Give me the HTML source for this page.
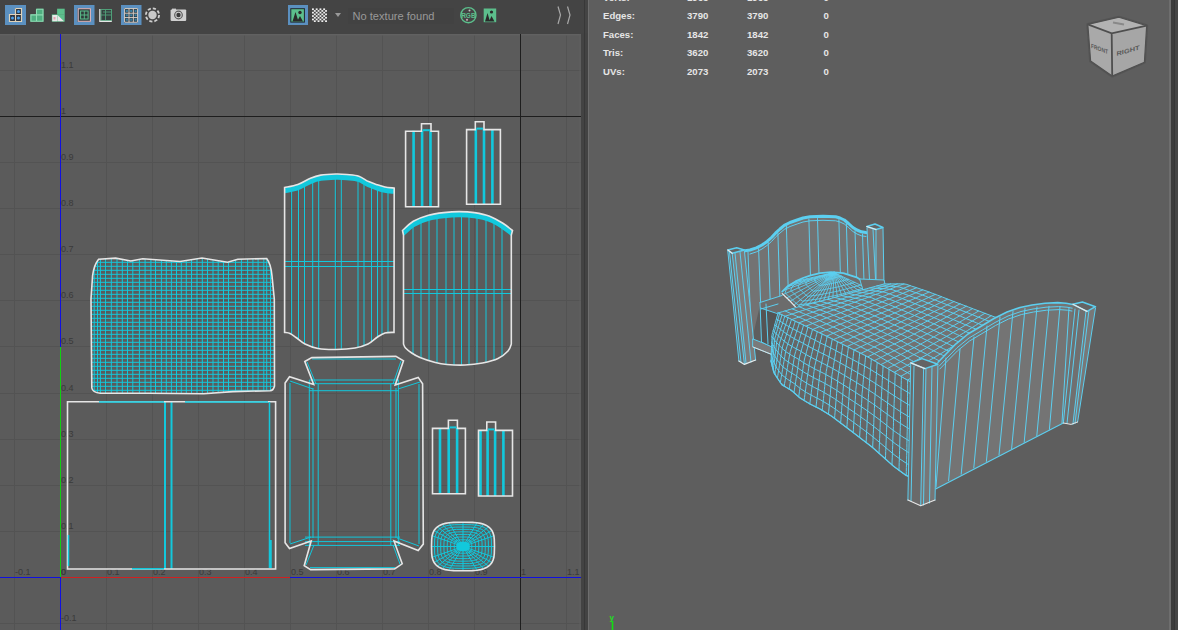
<!DOCTYPE html><html><head><meta charset="utf-8"><style>
html,body{margin:0;padding:0;width:1178px;height:630px;overflow:hidden;background:#444444;}
svg{position:absolute;left:0;top:0;}
text{font-family:"Liberation Sans",sans-serif;}
</style></head><body>
<svg width="1178" height="630" viewBox="0 0 1178 630" shape-rendering="auto">
<rect x="0" y="0" width="1178" height="630" fill="#444444"/>
<rect x="0" y="34" width="581" height="596" fill="#5b5b5b"/>
<rect x="581" y="33" width="8" height="597" fill="#434343"/>
<rect x="584" y="0" width="1" height="630" fill="#383838"/>
<rect x="588" y="0" width="1" height="630" fill="#6e6e6e"/>
<rect x="589" y="0" width="580" height="630" fill="#5e5e5e"/>
<rect x="1169" y="0" width="2" height="630" fill="#6e6e6e"/>
<rect x="1171" y="0" width="4" height="630" fill="#3c3c3c"/>
<rect x="1174" y="0" width="1" height="630" fill="#363636"/>
<rect x="1175" y="0" width="3" height="630" fill="#454545"/>
<rect x="5" y="5" width="21" height="20" fill="#5b90c0"/>
<rect x="74" y="5" width="20.5" height="20" fill="#5b90c0"/>
<rect x="121" y="5" width="20.5" height="20" fill="#5b90c0"/>
<rect x="288" y="5" width="20" height="20" fill="#5b90c0"/>
<rect x="9" y="14.5" width="13" height="7.5" fill="#2a3340"/><rect x="15" y="8" width="7" height="7" fill="#2a3340"/>
<path d="M15.5,8.5H21.5V21.5H9.5V14.5H21.5M15.5,8.5V21.5" fill="none" stroke="#e0d2b8" stroke-width="1.2"/>
<circle cx="18.5" cy="11.5" r="1.5" fill="#4aa0e8"/>
<circle cx="12.5" cy="18" r="1.5" fill="#4aa0e8"/>
<circle cx="18.5" cy="18" r="1.5" fill="#4aa0e8"/>
<rect x="36" y="8.7" width="7.4" height="6" fill="#4fae80"/><rect x="30.4" y="14.4" width="13" height="7.3" fill="#4fae80"/>
<path d="M36.5,9.2H43V21.3H30.9V14.9H43M36.5,9.2V21.3" fill="none" stroke="#8fdcb4" stroke-width="1.1"/>
<rect x="57.1" y="8.7" width="7.6" height="6" fill="#5cbf8c"/><rect x="51.8" y="14.4" width="12.9" height="7.3" fill="#5cbf8c"/>
<rect x="52.3" y="15" width="5.3" height="6.3" fill="#e8e8e8"/><path d="M58,15.5L64,21.3H58Z" fill="#e8e8e8"/>
<rect x="53.5" y="17" width="2" height="2.5" fill="#e6a0b0"/>
<rect x="77.5" y="8" width="13.5" height="14" fill="#2f3a3a"/>
<rect x="78.2" y="8.7" width="12.2" height="12.6" fill="none" stroke="#e0b8c0" stroke-width="1.1"/>
<rect x="80.6" y="11" width="7.5" height="8" fill="none" stroke="#5cbf8c" stroke-width="1"/>
<path d="M84.3,11V19M80.6,15H88" stroke="#5cbf8c" stroke-width="0.9" fill="none"/>
<rect x="99.5" y="9" width="12" height="12.5" fill="#354040"/>
<rect x="101" y="9.5" width="10.5" height="11" fill="none" stroke="#4f9f78" stroke-width="1"/>
<path d="M105.5,9.5V20.5M101,15H111.5M103,12H111" stroke="#4f9f78" stroke-width="0.9" fill="none"/>
<path d="M99.8,9V21.3H111.8" fill="none" stroke="#e6e6e6" stroke-width="1.2"/>
<rect x="124" y="8.2" width="14" height="14.4" fill="#25303a"/>
<path d="M124.6,8.6V22.2H137.6V8.6H124.6M129,8.6V22.2M133.3,8.6V22.2M124.6,13.2H137.6M124.6,17.6H137.6" fill="none" stroke="#d8d0c8" stroke-width="1"/>
<rect x="125.7" y="9.8" width="2.2" height="2.2" fill="#3a7fa0"/>
<rect x="125.7" y="14.200000000000001" width="2.2" height="2.2" fill="#3a7fa0"/>
<rect x="125.7" y="18.6" width="2.2" height="2.2" fill="#3a7fa0"/>
<rect x="130.1" y="9.8" width="2.2" height="2.2" fill="#3a7fa0"/>
<rect x="130.1" y="14.200000000000001" width="2.2" height="2.2" fill="#3a7fa0"/>
<rect x="130.1" y="18.6" width="2.2" height="2.2" fill="#3a7fa0"/>
<rect x="134.5" y="9.8" width="2.2" height="2.2" fill="#3a7fa0"/>
<rect x="134.5" y="14.200000000000001" width="2.2" height="2.2" fill="#3a7fa0"/>
<rect x="134.5" y="18.6" width="2.2" height="2.2" fill="#3a7fa0"/>
<circle cx="152.5" cy="15" r="6.6" fill="none" stroke="#cfcfcf" stroke-width="1.8" stroke-dasharray="3.2 2"/>
<circle cx="152.5" cy="15" r="4.2" fill="#c8c8c8"/>
<rect x="170.6" y="9.5" width="15.6" height="11.5" rx="1" fill="#cfcfcf"/><rect x="172" y="8.6" width="4" height="2" fill="#cfcfcf"/>
<circle cx="178.5" cy="15" r="3.8" fill="none" stroke="#5a5a5a" stroke-width="1.2"/><circle cx="178.5" cy="15" r="2.2" fill="#3a3a3a"/>
<rect x="290.3" y="8.2" width="14.6" height="14.4" fill="#1f2a2a"/><rect x="291.3" y="9.2" width="12.6" height="12.4" fill="#5cbf8c"/>
<path d="M292.5,21.5L295.5,12L298.5,21.5ZM297,21.5L300,16L303,21.5Z" fill="#2a2a2a"/><circle cx="300" cy="12.5" r="1.7" fill="#2a2a2a"/>
<rect x="312.00" y="8.40" width="1.87" height="1.7" fill="#f0f0f0"/>
<rect x="312.00" y="11.80" width="1.87" height="1.7" fill="#f0f0f0"/>
<rect x="312.00" y="15.20" width="1.87" height="1.7" fill="#f0f0f0"/>
<rect x="312.00" y="18.60" width="1.87" height="1.7" fill="#f0f0f0"/>
<rect x="313.87" y="10.10" width="1.87" height="1.7" fill="#f0f0f0"/>
<rect x="313.87" y="13.50" width="1.87" height="1.7" fill="#f0f0f0"/>
<rect x="313.87" y="16.90" width="1.87" height="1.7" fill="#f0f0f0"/>
<rect x="313.87" y="20.30" width="1.87" height="1.7" fill="#f0f0f0"/>
<rect x="315.74" y="8.40" width="1.87" height="1.7" fill="#f0f0f0"/>
<rect x="315.74" y="11.80" width="1.87" height="1.7" fill="#f0f0f0"/>
<rect x="315.74" y="15.20" width="1.87" height="1.7" fill="#f0f0f0"/>
<rect x="315.74" y="18.60" width="1.87" height="1.7" fill="#f0f0f0"/>
<rect x="317.61" y="10.10" width="1.87" height="1.7" fill="#f0f0f0"/>
<rect x="317.61" y="13.50" width="1.87" height="1.7" fill="#f0f0f0"/>
<rect x="317.61" y="16.90" width="1.87" height="1.7" fill="#f0f0f0"/>
<rect x="317.61" y="20.30" width="1.87" height="1.7" fill="#f0f0f0"/>
<rect x="319.48" y="8.40" width="1.87" height="1.7" fill="#f0f0f0"/>
<rect x="319.48" y="11.80" width="1.87" height="1.7" fill="#f0f0f0"/>
<rect x="319.48" y="15.20" width="1.87" height="1.7" fill="#f0f0f0"/>
<rect x="319.48" y="18.60" width="1.87" height="1.7" fill="#f0f0f0"/>
<rect x="321.35" y="10.10" width="1.87" height="1.7" fill="#f0f0f0"/>
<rect x="321.35" y="13.50" width="1.87" height="1.7" fill="#f0f0f0"/>
<rect x="321.35" y="16.90" width="1.87" height="1.7" fill="#f0f0f0"/>
<rect x="321.35" y="20.30" width="1.87" height="1.7" fill="#f0f0f0"/>
<rect x="323.22" y="8.40" width="1.87" height="1.7" fill="#f0f0f0"/>
<rect x="323.22" y="11.80" width="1.87" height="1.7" fill="#f0f0f0"/>
<rect x="323.22" y="15.20" width="1.87" height="1.7" fill="#f0f0f0"/>
<rect x="323.22" y="18.60" width="1.87" height="1.7" fill="#f0f0f0"/>
<rect x="325.09" y="10.10" width="1.87" height="1.7" fill="#f0f0f0"/>
<rect x="325.09" y="13.50" width="1.87" height="1.7" fill="#f0f0f0"/>
<rect x="325.09" y="16.90" width="1.87" height="1.7" fill="#f0f0f0"/>
<rect x="325.09" y="20.30" width="1.87" height="1.7" fill="#f0f0f0"/>
<path d="M335,13L341,13L338,17Z" fill="#9a9a9a"/>
<rect x="348" y="8" width="106" height="16" fill="#424242"/>
<text x="352.5" y="19.8" font-size="11" fill="#999999" textLength="82" lengthAdjust="spacingAndGlyphs">No texture found</text>
<circle cx="468.4" cy="15.2" r="7.6" fill="none" stroke="#5cbf8c" stroke-width="1.4"/>
<text x="468.4" y="17.6" font-size="6.5" font-weight="bold" fill="#5cbf8c" text-anchor="middle">RGB</text>
<circle cx="469.5" cy="10.5" r="1" fill="#c0c0c0"/><circle cx="467" cy="19.8" r="1.1" fill="#c0a0a8"/>
<rect x="483.7" y="8.5" width="12.5" height="13.7" fill="#5cbf8c"/>
<path d="M485,21.5L487.5,13L490,21.5ZM489,21.5L491.5,16L494.5,21.5Z" fill="#2a2a2a"/><circle cx="491.5" cy="12" r="1.6" fill="#2a2a2a"/>
<path d="M558,6.5L560.5,15L558,24M567.5,6.5L570,15L567.5,24" fill="none" stroke="#a8a8a8" stroke-width="1.2"/>
<defs><clipPath id="cv"><rect x="0" y="34" width="581" height="596"/></clipPath></defs>
<g clip-path="url(#cv)">
<rect x="-32" y="33" width="1" height="597" fill="#535353"/>
<rect x="14" y="33" width="1" height="597" fill="#535353"/>
<rect x="60" y="33" width="1" height="597" fill="#535353"/>
<rect x="106" y="33" width="1" height="597" fill="#535353"/>
<rect x="152" y="33" width="1" height="597" fill="#535353"/>
<rect x="198" y="33" width="1" height="597" fill="#535353"/>
<rect x="244" y="33" width="1" height="597" fill="#535353"/>
<rect x="290" y="33" width="1" height="597" fill="#535353"/>
<rect x="336" y="33" width="1" height="597" fill="#535353"/>
<rect x="382" y="33" width="1" height="597" fill="#535353"/>
<rect x="428" y="33" width="1" height="597" fill="#535353"/>
<rect x="474" y="33" width="1" height="597" fill="#535353"/>
<rect x="520" y="33" width="1" height="597" fill="#535353"/>
<rect x="566" y="33" width="1" height="597" fill="#535353"/>
<rect x="612" y="33" width="1" height="597" fill="#535353"/>
<rect x="0" y="623" width="581" height="1" fill="#535353"/>
<rect x="0" y="577" width="581" height="1" fill="#535353"/>
<rect x="0" y="531" width="581" height="1" fill="#535353"/>
<rect x="0" y="485" width="581" height="1" fill="#535353"/>
<rect x="0" y="439" width="581" height="1" fill="#535353"/>
<rect x="0" y="393" width="581" height="1" fill="#535353"/>
<rect x="0" y="346" width="581" height="1" fill="#535353"/>
<rect x="0" y="300" width="581" height="1" fill="#535353"/>
<rect x="0" y="254" width="581" height="1" fill="#535353"/>
<rect x="0" y="208" width="581" height="1" fill="#535353"/>
<rect x="0" y="162" width="581" height="1" fill="#535353"/>
<rect x="0" y="116" width="581" height="1" fill="#535353"/>
<rect x="0" y="70" width="581" height="1" fill="#535353"/>
<rect x="0" y="24" width="581" height="1" fill="#535353"/>
<rect x="0" y="34" width="581" height="1.5" fill="#616161"/>
<rect x="579.5" y="34" width="1" height="596" fill="#606060"/>
<rect x="0" y="116" width="581" height="1" fill="#1e1e1e"/>
<rect x="520" y="33" width="1" height="597" fill="#1e1e1e"/>
<rect x="0" y="577" width="581" height="1" fill="#1010e0"/>
<rect x="60" y="577" width="230" height="1" fill="#d02020"/>
<rect x="60" y="33" width="1" height="597" fill="#1010e0"/>
<rect x="60" y="347" width="1" height="230" fill="#10d010"/>
<text x="15" y="575" font-size="9" fill="#3a3a3a">-0.1</text>
<text x="61" y="575" font-size="9" fill="#3a3a3a">0</text>
<text x="107" y="575" font-size="9" fill="#3a3a3a">0.1</text>
<text x="153" y="575" font-size="9" fill="#3a3a3a">0.2</text>
<text x="199" y="575" font-size="9" fill="#3a3a3a">0.3</text>
<text x="245" y="575" font-size="9" fill="#3a3a3a">0.4</text>
<text x="291" y="575" font-size="9" fill="#3a3a3a">0.5</text>
<text x="337" y="575" font-size="9" fill="#3a3a3a">0.6</text>
<text x="383" y="575" font-size="9" fill="#3a3a3a">0.7</text>
<text x="429" y="575" font-size="9" fill="#3a3a3a">0.8</text>
<text x="475" y="575" font-size="9" fill="#3a3a3a">0.9</text>
<text x="521" y="575" font-size="9" fill="#3a3a3a">1</text>
<text x="567" y="575" font-size="9" fill="#3a3a3a">1.1</text>
<text x="61" y="621" font-size="9" fill="#3a3a3a">-0.1</text>
<text x="61" y="575" font-size="9" fill="#3a3a3a">0</text>
<text x="61" y="529" font-size="9" fill="#3a3a3a">0.1</text>
<text x="61" y="483" font-size="9" fill="#3a3a3a">0.2</text>
<text x="61" y="437" font-size="9" fill="#3a3a3a">0.3</text>
<text x="61" y="391" font-size="9" fill="#3a3a3a">0.4</text>
<text x="61" y="344" font-size="9" fill="#3a3a3a">0.5</text>
<text x="61" y="298" font-size="9" fill="#3a3a3a">0.6</text>
<text x="61" y="252" font-size="9" fill="#3a3a3a">0.7</text>
<text x="61" y="206" font-size="9" fill="#3a3a3a">0.8</text>
<text x="61" y="160" font-size="9" fill="#3a3a3a">0.9</text>
<text x="61" y="114" font-size="9" fill="#3a3a3a">1</text>
<text x="61" y="68" font-size="9" fill="#3a3a3a">1.1</text>
<defs><clipPath id="blk"><path d="M98.6,259.3 L115.6,258.1 L130.8,261 L142.7,258.8 L180,261.5 L202,258 L227.6,262.2 L237.8,259.3 L266.7,258.5 Q271,264 272,276 L274.3,299 L274.5,386 Q273.5,390.5 270,390.7 L232.7,391.6 L203.8,393.8 L147.8,393.3 L100.3,393.3 Q92.5,392.5 91.8,388 L91,299 L92.6,275.5 Q94,265 98.6,259.3 Z"/></clipPath></defs>
<g clip-path="url(#blk)" stroke="#12c8dc" stroke-width="1" fill="none">
<path d="M94.2,255V396M97.5,255V396M100.4,255V396M105.6,255V396M111.3,255V396M117.0,255V396M122.3,255V396M127.5,255V396M132.8,255V396M139.4,255V396M145.1,255V396M150.9,255V396M155.5,255V396M161.4,255V396M166.3,255V396M171.4,255V396M176.5,255V396M181.3,255V396M186.3,255V396M191.5,255V396M197.0,255V396M202.3,255V396M207.5,255V396M213.0,255V396M218.2,255V396M223.5,255V396M228.5,255V396M235.5,255V396M241.4,255V396M247.6,255V396M252.9,255V396M258.1,255V396M263.8,255V396M266.7,255V396M270.5,255V396M88,262.3H278M88,266.3H278M88,270.3H278M88,274.3H278M88,278.3H278M88,282.3H278M88,286.3H278M88,290.3H278M88,294.3H278M88,298.3H278M88,302.3H278M88,306.3H278M88,310.3H278M88,314.3H278M88,318.3H278M88,322.3H278M88,326.3H278M88,330.3H278M88,334.3H278M88,338.3H278M88,342.3H278M88,346.3H278M88,350.3H278M88,354.3H278M88,358.3H278M88,362.3H278M88,366.3H278M88,370.3H278M88,374.3H278M88,378.3H278M88,382.3H278M88,386.3H278M88,390.3H278"/>
</g>
<path d="M98.6,259.3 L115.6,258.1 L130.8,261 L142.7,258.8 L180,261.5 L202,258 L227.6,262.2 L237.8,259.3 L266.7,258.5 Q271,264 272,276 L274.3,299 L274.5,386 Q273.5,390.5 270,390.7 L232.7,391.6 L203.8,393.8 L147.8,393.3 L100.3,393.3 Q92.5,392.5 91.8,388 L91,299 L92.6,275.5 Q94,265 98.6,259.3 Z" fill="none" stroke="#e6e6e6" stroke-width="1.6"/>
<g fill="none" stroke="#12c8dc" stroke-width="2">
<path d="M165,402V569M171.5,402V569"/>
</g>
<path d="M67.5,401.7H275.6V569H67.5Z" fill="none" stroke="#e6e6e6" stroke-width="1.6"/>
<path d="M269.5,402V568M271,540V568M99,401.9H164M185,401.9H268M132,568.8H164M68.5,535V566" fill="none" stroke="#12c8dc" stroke-width="1.5"/>
<defs><clipPath id="hb1"><path d="M284.6,187.5 C286.8,187.0 293.5,186.1 297.8,184.5 C302.1,182.9 306.7,179.8 310.5,178.2 C314.3,176.6 316.4,175.8 320.7,175.1 C324.9,174.4 331.6,174.1 336,174 C340.4,173.9 343.1,174.1 346.9,174.5 C350.7,174.9 355.2,175.0 358.8,176.2 C362.4,177.4 365.5,180.2 368.6,181.6 C371.7,183.0 374.6,183.9 377.3,184.8 C380.0,185.7 382.1,186.4 384.9,187 C387.7,187.6 392.6,187.9 394.2,188.1 L394,332.4 C392.5,332.5 387.8,332.2 385,333 C382.2,333.8 380.3,335.2 377.5,337 C374.7,338.8 371.8,342.2 368,344 C364.2,345.8 360.3,347.1 355,348 C349.7,348.9 342.2,349.4 336,349.5 C329.8,349.6 323.2,349.4 318,348.5 C312.8,347.6 308.7,345.8 305,344 C301.3,342.2 298.5,339.2 296,337.5 C293.5,335.8 291.9,334.4 290,333.5 C288.1,332.6 285.5,332.6 284.6,332.4 Z"/></clipPath></defs>
<g clip-path="url(#hb1)" fill="none" stroke="#12c8dc" stroke-width="1">
<path d="M291.6,170V352M298.5,170V352M304.5,170V352M312.7,170V352M318.7,170V352M335.3,170V352M341.3,170V352M358,170V352M364,170V352M371.5,170V352M377.5,170V352M382,170V352M388,170V352"/>
<path d="M280,261.5H400M280,266.5H400"/>
</g>
<g clip-path="url(#hb1)"><path d="M284.6,190.5 C286.8,190.0 293.5,189.1 297.8,187.5 C302.1,185.9 306.7,182.8 310.5,181.2 C314.3,179.6 316.4,178.8 320.7,178.1 C324.9,177.4 331.6,177.1 336,177 C340.4,176.9 343.1,177.1 346.9,177.5 C350.7,177.9 355.2,178.0 358.8,179.2 C362.4,180.4 365.5,183.2 368.6,184.6 C371.7,186.0 374.6,186.9 377.3,187.8 C380.0,188.7 382.1,189.4 384.9,190 C387.7,190.6 392.6,190.9 394.2,191.1" fill="none" stroke="#12c8dc" stroke-width="5.5"/></g>
<path d="M284.6,187.5 C286.8,187.0 293.5,186.1 297.8,184.5 C302.1,182.9 306.7,179.8 310.5,178.2 C314.3,176.6 316.4,175.8 320.7,175.1 C324.9,174.4 331.6,174.1 336,174 C340.4,173.9 343.1,174.1 346.9,174.5 C350.7,174.9 355.2,175.0 358.8,176.2 C362.4,177.4 365.5,180.2 368.6,181.6 C371.7,183.0 374.6,183.9 377.3,184.8 C380.0,185.7 382.1,186.4 384.9,187 C387.7,187.6 392.6,187.9 394.2,188.1 L394,332.4 C392.5,332.5 387.8,332.2 385,333 C382.2,333.8 380.3,335.2 377.5,337 C374.7,338.8 371.8,342.2 368,344 C364.2,345.8 360.3,347.1 355,348 C349.7,348.9 342.2,349.4 336,349.5 C329.8,349.6 323.2,349.4 318,348.5 C312.8,347.6 308.7,345.8 305,344 C301.3,342.2 298.5,339.2 296,337.5 C293.5,335.8 291.9,334.4 290,333.5 C288.1,332.6 285.5,332.6 284.6,332.4 Z" fill="none" stroke="#e6e6e6" stroke-width="1.6"/>
<defs><clipPath id="fb"><path d="M402.5,230.5 C404.3,229.0 409.0,223.9 413.3,221.3 C417.6,218.8 423.4,216.6 428.5,215.2 C433.6,213.8 438.7,213.2 443.8,212.6 C448.9,212.0 454.0,211.6 459.1,211.6 C464.2,211.6 469.3,211.8 474.4,212.6 C479.5,213.4 484.9,214.4 489.6,216.2 C494.4,218.0 499.1,220.9 502.9,223.3 C506.7,225.7 510.9,229.3 512.5,230.5 L511.3,235 L511.3,344 C510.8,345.2 510.2,348.6 508,351 C505.8,353.4 502.2,356.5 498,358.5 C493.8,360.5 488.0,361.9 482.5,363 C477.0,364.1 470.9,364.8 465,365 C459.1,365.2 451.9,364.9 447,364.5 C442.1,364.1 439.8,363.7 435.3,362.5 C430.8,361.3 423.9,359.1 420,357.5 C416.1,355.9 414.1,354.6 411.7,353 C409.3,351.4 406.9,349.5 405.5,348 C404.1,346.5 403.8,344.7 403.5,344 L403.5,235 Z"/></clipPath></defs>
<g clip-path="url(#fb)" fill="none" stroke="#12c8dc" stroke-width="1">
<path d="M413,205V370M421,205V370M429,205V370M437,205V370M446,205V370M454,205V370M461.5,205V370M469,205V370M477,205V370M486,205V370M494,205V370M502,205V370"/>
<path d="M400,289.5H515M400,293.5H515"/>
</g>
<g clip-path="url(#fb)"><path d="M402.5,233.5 C404.3,232.0 409.0,226.9 413.3,224.3 C417.6,221.8 423.4,219.6 428.5,218.2 C433.6,216.8 438.7,216.2 443.8,215.6 C448.9,215.0 454.0,214.6 459.1,214.6 C464.2,214.6 469.3,214.8 474.4,215.6 C479.5,216.4 484.9,217.4 489.6,219.2 C494.4,221.0 499.1,223.9 502.9,226.3 C506.7,228.7 510.9,232.3 512.5,233.5" fill="none" stroke="#12c8dc" stroke-width="5.5"/></g>
<path d="M402.5,230.5 C404.3,229.0 409.0,223.9 413.3,221.3 C417.6,218.8 423.4,216.6 428.5,215.2 C433.6,213.8 438.7,213.2 443.8,212.6 C448.9,212.0 454.0,211.6 459.1,211.6 C464.2,211.6 469.3,211.8 474.4,212.6 C479.5,213.4 484.9,214.4 489.6,216.2 C494.4,218.0 499.1,220.9 502.9,223.3 C506.7,225.7 510.9,229.3 512.5,230.5 L511.3,235 L511.3,344 C510.8,345.2 510.2,348.6 508,351 C505.8,353.4 502.2,356.5 498,358.5 C493.8,360.5 488.0,361.9 482.5,363 C477.0,364.1 470.9,364.8 465,365 C459.1,365.2 451.9,364.9 447,364.5 C442.1,364.1 439.8,363.7 435.3,362.5 C430.8,361.3 423.9,359.1 420,357.5 C416.1,355.9 414.1,354.6 411.7,353 C409.3,351.4 406.9,349.5 405.5,348 C404.1,346.5 403.8,344.7 403.5,344 L403.5,235 Z" fill="none" stroke="#e6e6e6" stroke-width="1.6"/>
<g fill="none" stroke="#12c8dc" stroke-width="2.6">
<path d="M413.6,130.7V206.7M422.1,130.7V206.7M430.5,130.7V206.7"/>
</g>
<path d="M405.6,131.2H421.5V123.7H431V131.2H438.5V206.7H405.6Z" fill="none" stroke="#e6e6e6" stroke-width="1.6"/>
<path d="M422.5,130.2H430" stroke="#12c8dc" stroke-width="2" fill="none"/>
<g fill="none" stroke="#12c8dc" stroke-width="2.6">
<path d="M475.8,129.1V204.2M484,129.1V204.2M492.4,129.1V204.2"/>
</g>
<path d="M466.6,129.6H475.3V121.7H484V129.6H500.4V204.2H466.6Z" fill="none" stroke="#e6e6e6" stroke-width="1.6"/>
<path d="M476.3,128.6H483" stroke="#12c8dc" stroke-width="2" fill="none"/>
<g fill="none" stroke="#12c8dc" stroke-width="2.6">
<path d="M440,427.9V493.7M448.7,427.9V493.7M457.1,427.9V493.7"/>
</g>
<path d="M432.5,428.4H448.4V420.3H457.4V428.4H465.4V493.7H432.5Z" fill="none" stroke="#e6e6e6" stroke-width="1.6"/>
<path d="M449.4,427.4H456.4" stroke="#12c8dc" stroke-width="2" fill="none"/>
<g fill="none" stroke="#12c8dc" stroke-width="2.6">
<path d="M480.5,429.9V496M487.6,429.9V496M495.1,429.9V496M503.4,429.9V496"/>
</g>
<path d="M478.5,430.4H486.8V422H495.6V430.4H512.5V496H478.5Z" fill="none" stroke="#e6e6e6" stroke-width="1.6"/>
<path d="M487.8,429.4H494.6" stroke="#12c8dc" stroke-width="2" fill="none"/>
<g fill="none" stroke="#12c8dc" stroke-width="1">
<path d="M309.3,380H399M309,383.7H399M309,390.7H399 M309.3,380V545M318.2,384V545M390.8,384V545M398.4,380V545 M305,537.1H400M305,541.6H400M305,545.4H400 M307,362L316,384 M401,361L393,384 M290,381L313,389 M420,382L398,389 M290,544L311,537 M419,546L397,538 M306,565L314,545 M400,564L393,545 M312,359H396 M310,567.6H395 M290,383V543 M419,384V544 M313,388V538 M396,388V538"/>
</g>
<path d="M304.8,361.5 L311.8,357.6 L395.9,356.4 L403.5,360.8 L395.2,385 L418.2,377.4 L422.6,383.7 L423.3,544.1 L418.2,550.5 L394,540.9 L402.2,563.8 L394.6,568.9 L310.6,569.6 L304.2,565.7 L311.2,540.9 L289.5,548.6 L285.1,542.8 L285.1,383.1 L289.5,376.7 L313.7,384.4 Z" fill="none" stroke="#e6e6e6" stroke-width="1.6"/>
<defs><clipPath id="pil"><path d="M494.5,546.5 L494.3,553.6 L493.9,557.3 L493.0,560.1 L491.9,562.5 L490.4,564.5 L488.6,566.2 L486.4,567.6 L483.8,568.7 L480.7,569.6 L477.0,570.2 L472.3,570.6 L463.0,570.7 L453.7,570.6 L449.0,570.2 L445.3,569.6 L442.2,568.7 L439.6,567.6 L437.4,566.2 L435.6,564.5 L434.1,562.5 L433.0,560.1 L432.1,557.3 L431.7,553.6 L431.5,546.5 L431.7,539.4 L432.1,535.7 L433.0,532.9 L434.1,530.5 L435.6,528.5 L437.4,526.8 L439.6,525.4 L442.2,524.3 L445.3,523.4 L449.0,522.8 L453.7,522.4 L463.0,522.3 L472.3,522.4 L477.0,522.8 L480.7,523.4 L483.8,524.3 L486.4,525.4 L488.6,526.8 L490.4,528.5 L491.9,530.5 L493.0,532.9 L493.9,535.7 L494.3,539.4Z"/></clipPath></defs>
<g clip-path="url(#pil)" fill="none" stroke="#12c8dc" stroke-width="1">
<rect x="429" y="518.5" width="68" height="56" fill="#12c8dc" fill-opacity="0.1" stroke="none"/>
<path d="M467.9,546.5 L467.8,547.6 L467.8,548.2 L467.6,548.6 L467.5,549.0 L467.2,549.3 L467.0,549.5 L466.6,549.8 L466.2,549.9 L465.7,550.1 L465.2,550.2 L464.4,550.2 L463.0,550.2 L461.6,550.2 L460.8,550.2 L460.3,550.1 L459.8,549.9 L459.4,549.8 L459.0,549.5 L458.8,549.3 L458.5,549.0 L458.4,548.6 L458.2,548.2 L458.2,547.6 L458.1,546.5 L458.2,545.4 L458.2,544.8 L458.4,544.4 L458.5,544.0 L458.8,543.7 L459.0,543.5 L459.4,543.2 L459.8,543.1 L460.3,542.9 L460.8,542.8 L461.6,542.8 L463.0,542.8 L464.4,542.8 L465.2,542.8 L465.7,542.9 L466.2,543.1 L466.6,543.2 L467.0,543.5 L467.2,543.7 L467.5,544.0 L467.6,544.4 L467.8,544.8 L467.8,545.4Z"/>
<path d="M471.8,546.5 L471.7,548.5 L471.6,549.5 L471.4,550.3 L471.0,550.9 L470.6,551.5 L470.1,552.0 L469.5,552.4 L468.8,552.7 L467.9,552.9 L466.9,553.1 L465.6,553.2 L463.0,553.2 L460.4,553.2 L459.1,553.1 L458.1,552.9 L457.2,552.7 L456.5,552.4 L455.9,552.0 L455.4,551.5 L455.0,550.9 L454.6,550.3 L454.4,549.5 L454.3,548.5 L454.2,546.5 L454.3,544.5 L454.4,543.5 L454.6,542.7 L455.0,542.1 L455.4,541.5 L455.9,541.0 L456.5,540.6 L457.2,540.3 L458.1,540.1 L459.1,539.9 L460.4,539.8 L463.0,539.8 L465.6,539.8 L466.9,539.9 L467.9,540.1 L468.8,540.3 L469.5,540.6 L470.1,541.0 L470.6,541.5 L471.0,542.1 L471.4,542.7 L471.6,543.5 L471.7,544.5Z"/>
<path d="M475.4,546.5 L475.3,549.3 L475.1,550.7 L474.8,551.8 L474.4,552.8 L473.8,553.6 L473.1,554.2 L472.2,554.8 L471.2,555.2 L470.0,555.6 L468.5,555.8 L466.6,556.0 L463.0,556.0 L459.4,556.0 L457.5,555.8 L456.0,555.6 L454.8,555.2 L453.8,554.8 L452.9,554.2 L452.2,553.6 L451.6,552.8 L451.2,551.8 L450.9,550.7 L450.7,549.3 L450.6,546.5 L450.7,543.7 L450.9,542.3 L451.2,541.2 L451.6,540.2 L452.2,539.4 L452.9,538.8 L453.8,538.2 L454.8,537.8 L456.0,537.4 L457.5,537.2 L459.4,537.0 L463.0,537.0 L466.6,537.0 L468.5,537.2 L470.0,537.4 L471.2,537.8 L472.2,538.2 L473.1,538.8 L473.8,539.4 L474.4,540.2 L474.8,541.2 L475.1,542.3 L475.3,543.7Z"/>
<path d="M478.8,546.5 L478.7,550.1 L478.5,551.9 L478.1,553.3 L477.5,554.5 L476.8,555.5 L475.8,556.4 L474.7,557.1 L473.4,557.6 L471.9,558.1 L470.0,558.4 L467.7,558.6 L463.0,558.6 L458.3,558.6 L456.0,558.4 L454.1,558.1 L452.6,557.6 L451.3,557.1 L450.2,556.4 L449.2,555.5 L448.5,554.5 L447.9,553.3 L447.5,551.9 L447.3,550.1 L447.2,546.5 L447.3,542.9 L447.5,541.1 L447.9,539.7 L448.5,538.5 L449.2,537.5 L450.2,536.6 L451.3,535.9 L452.6,535.4 L454.1,534.9 L456.0,534.6 L458.3,534.4 L463.0,534.4 L467.7,534.4 L470.0,534.6 L471.9,534.9 L473.4,535.4 L474.7,535.9 L475.8,536.6 L476.8,537.5 L477.5,538.5 L478.1,539.7 L478.5,541.1 L478.7,542.9Z"/>
<path d="M482.1,546.5 L482.0,550.8 L481.7,553.0 L481.2,554.8 L480.5,556.2 L479.6,557.4 L478.5,558.4 L477.2,559.3 L475.6,560.0 L473.7,560.5 L471.5,560.9 L468.6,561.1 L463.0,561.2 L457.4,561.1 L454.5,560.9 L452.3,560.5 L450.4,560.0 L448.8,559.3 L447.5,558.4 L446.4,557.4 L445.5,556.2 L444.8,554.8 L444.3,553.0 L444.0,550.8 L443.9,546.5 L444.0,542.2 L444.3,540.0 L444.8,538.2 L445.5,536.8 L446.4,535.6 L447.5,534.6 L448.8,533.7 L450.4,533.0 L452.3,532.5 L454.5,532.1 L457.4,531.9 L463.0,531.8 L468.6,531.9 L471.5,532.1 L473.7,532.5 L475.6,533.0 L477.2,533.7 L478.5,534.6 L479.6,535.6 L480.5,536.8 L481.2,538.2 L481.7,540.0 L482.0,542.2Z"/>
<path d="M485.3,546.5 L485.2,551.6 L484.9,554.1 L484.3,556.1 L483.5,557.8 L482.4,559.2 L481.1,560.4 L479.6,561.4 L477.7,562.2 L475.5,562.8 L472.9,563.3 L469.6,563.6 L463.0,563.6 L456.4,563.6 L453.1,563.3 L450.5,562.8 L448.3,562.2 L446.4,561.4 L444.9,560.4 L443.6,559.2 L442.5,557.8 L441.7,556.1 L441.1,554.1 L440.8,551.6 L440.7,546.5 L440.8,541.4 L441.1,538.9 L441.7,536.9 L442.5,535.2 L443.6,533.8 L444.9,532.6 L446.4,531.6 L448.3,530.8 L450.5,530.2 L453.1,529.7 L456.4,529.4 L463.0,529.4 L469.6,529.4 L472.9,529.7 L475.5,530.2 L477.7,530.8 L479.6,531.6 L481.1,532.6 L482.4,533.8 L483.5,535.2 L484.3,536.9 L484.9,538.9 L485.2,541.4Z"/>
<path d="M488.4,546.5 L488.3,552.3 L487.9,555.2 L487.3,557.5 L486.3,559.4 L485.1,561.0 L483.7,562.4 L481.9,563.5 L479.8,564.4 L477.3,565.1 L474.3,565.6 L470.5,565.9 L463.0,566.0 L455.5,565.9 L451.7,565.6 L448.7,565.1 L446.2,564.4 L444.1,563.5 L442.3,562.4 L440.9,561.0 L439.7,559.4 L438.7,557.5 L438.1,555.2 L437.7,552.3 L437.6,546.5 L437.7,540.7 L438.1,537.8 L438.7,535.5 L439.7,533.6 L440.9,532.0 L442.3,530.6 L444.1,529.5 L446.2,528.6 L448.7,527.9 L451.7,527.4 L455.5,527.1 L463.0,527.0 L470.5,527.1 L474.3,527.4 L477.3,527.9 L479.8,528.6 L481.9,529.5 L483.7,530.6 L485.1,532.0 L486.3,533.6 L487.3,535.5 L487.9,537.8 L488.3,540.7Z"/>
<path d="M491.5,546.5 L491.4,553.0 L490.9,556.2 L490.2,558.8 L489.1,560.9 L487.8,562.8 L486.1,564.3 L484.2,565.6 L481.8,566.6 L479.0,567.4 L475.7,567.9 L471.4,568.3 L463.0,568.4 L454.6,568.3 L450.3,567.9 L447.0,567.4 L444.2,566.6 L441.8,565.6 L439.9,564.3 L438.2,562.8 L436.9,560.9 L435.8,558.8 L435.1,556.2 L434.6,553.0 L434.5,546.5 L434.6,540.0 L435.1,536.8 L435.8,534.2 L436.9,532.1 L438.2,530.2 L439.9,528.7 L441.8,527.4 L444.2,526.4 L447.0,525.6 L450.3,525.1 L454.6,524.7 L463.0,524.6 L471.4,524.7 L475.7,525.1 L479.0,525.6 L481.8,526.4 L484.2,527.4 L486.1,528.7 L487.8,530.2 L489.1,532.1 L490.2,534.2 L490.9,536.8 L491.4,540.0Z"/>
<path d="M463,546.5L494.5,546.5"/>
<path d="M463,546.5L493.9,557.3"/>
<path d="M463,546.5L491.9,562.5"/>
<path d="M463,546.5L488.6,566.2"/>
<path d="M463,546.5L483.8,568.7"/>
<path d="M463,546.5L477.0,570.2"/>
<path d="M463,546.5L463.0,570.7"/>
<path d="M463,546.5L449.0,570.2"/>
<path d="M463,546.5L442.2,568.7"/>
<path d="M463,546.5L437.4,566.2"/>
<path d="M463,546.5L434.1,562.5"/>
<path d="M463,546.5L432.1,557.3"/>
<path d="M463,546.5L431.5,546.5"/>
<path d="M463,546.5L432.1,535.7"/>
<path d="M463,546.5L434.1,530.5"/>
<path d="M463,546.5L437.4,526.8"/>
<path d="M463,546.5L442.2,524.3"/>
<path d="M463,546.5L449.0,522.8"/>
<path d="M463,546.5L463.0,522.3"/>
<path d="M463,546.5L477.0,522.8"/>
<path d="M463,546.5L483.8,524.3"/>
<path d="M463,546.5L488.6,526.8"/>
<path d="M463,546.5L491.9,530.5"/>
<path d="M463,546.5L493.9,535.7"/>
<ellipse cx="463" cy="546.5" rx="7" ry="5" fill="#12c8dc" stroke="none"/>
</g>
<path d="M494.5,546.5 L494.3,553.6 L493.9,557.3 L493.0,560.1 L491.9,562.5 L490.4,564.5 L488.6,566.2 L486.4,567.6 L483.8,568.7 L480.7,569.6 L477.0,570.2 L472.3,570.6 L463.0,570.7 L453.7,570.6 L449.0,570.2 L445.3,569.6 L442.2,568.7 L439.6,567.6 L437.4,566.2 L435.6,564.5 L434.1,562.5 L433.0,560.1 L432.1,557.3 L431.7,553.6 L431.5,546.5 L431.7,539.4 L432.1,535.7 L433.0,532.9 L434.1,530.5 L435.6,528.5 L437.4,526.8 L439.6,525.4 L442.2,524.3 L445.3,523.4 L449.0,522.8 L453.7,522.4 L463.0,522.3 L472.3,522.4 L477.0,522.8 L480.7,523.4 L483.8,524.3 L486.4,525.4 L488.6,526.8 L490.4,528.5 L491.9,530.5 L493.0,532.9 L493.9,535.7 L494.3,539.4Z" fill="none" stroke="#e6e6e6" stroke-width="1.6"/>
</g>
<text x="603" y="0.6" font-size="9.6" font-weight="bold" fill="#e6e6e6">Verts:</text>
<text x="687" y="0.6" font-size="9.6" font-weight="bold" fill="#e6e6e6">1965</text>
<text x="747" y="0.6" font-size="9.6" font-weight="bold" fill="#e6e6e6">1965</text>
<text x="823.5" y="0.6" font-size="9.6" font-weight="bold" fill="#e6e6e6">0</text>
<text x="603" y="19.1" font-size="9.6" font-weight="bold" fill="#e6e6e6">Edges:</text>
<text x="687" y="19.1" font-size="9.6" font-weight="bold" fill="#e6e6e6">3790</text>
<text x="747" y="19.1" font-size="9.6" font-weight="bold" fill="#e6e6e6">3790</text>
<text x="823.5" y="19.1" font-size="9.6" font-weight="bold" fill="#e6e6e6">0</text>
<text x="603" y="37.6" font-size="9.6" font-weight="bold" fill="#e6e6e6">Faces:</text>
<text x="687" y="37.6" font-size="9.6" font-weight="bold" fill="#e6e6e6">1842</text>
<text x="747" y="37.6" font-size="9.6" font-weight="bold" fill="#e6e6e6">1842</text>
<text x="823.5" y="37.6" font-size="9.6" font-weight="bold" fill="#e6e6e6">0</text>
<text x="603" y="56.1" font-size="9.6" font-weight="bold" fill="#e6e6e6">Tris:</text>
<text x="687" y="56.1" font-size="9.6" font-weight="bold" fill="#e6e6e6">3620</text>
<text x="747" y="56.1" font-size="9.6" font-weight="bold" fill="#e6e6e6">3620</text>
<text x="823.5" y="56.1" font-size="9.6" font-weight="bold" fill="#e6e6e6">0</text>
<text x="603" y="74.6" font-size="9.6" font-weight="bold" fill="#e6e6e6">UVs:</text>
<text x="687" y="74.6" font-size="9.6" font-weight="bold" fill="#e6e6e6">2073</text>
<text x="747" y="74.6" font-size="9.6" font-weight="bold" fill="#e6e6e6">2073</text>
<text x="823.5" y="74.6" font-size="9.6" font-weight="bold" fill="#e6e6e6">0</text>
<path d="M1087.8,24.4 L1118.9,17.2 L1146.7,25.6 L1144.4,62.2 L1112.2,76.1 L1090.6,61.1Z" fill="#565656" stroke="#555" stroke-width="3" stroke-linejoin="round"/>
<path d="M1087.8,24.4 L1118.9,17.2 L1146.7,25.6 L1111.7,33.3Z" fill="#b2b2b2"/>
<path d="M1087.8,24.4 L1111.7,33.3 L1112.2,76.1 L1090.6,61.1Z" fill="#a9a9a9"/>
<path d="M1111.7,33.3 L1146.7,25.6 L1144.4,62.2 L1112.2,76.1Z" fill="#a6a6a6"/>
<path d="M1087.8,24.4L1111.7,33.3L1146.7,25.6M1111.7,33.3L1112.2,76.1" fill="none" stroke="#4e4e4e" stroke-width="1.8"/>
<path d="M1087.8,24.4 L1118.9,17.2 L1146.7,25.6 L1144.4,62.2 L1112.2,76.1 L1090.6,61.1Z" fill="none" stroke="#505050" stroke-width="1.2" stroke-linejoin="round"/>
<text transform="matrix(1,0.36,0,1,1091,48)" font-size="6.2" font-weight="bold" fill="#585858" textLength="17" lengthAdjust="spacingAndGlyphs">FRONT</text>
<text transform="matrix(1,-0.28,0,1,1116.5,56)" font-size="6.2" font-weight="bold" fill="#585858" textLength="23" lengthAdjust="spacingAndGlyphs">RIGHT</text>
<path d="M1113,22.5L1124,24.5" stroke="#888" stroke-width="2.2"/>
<path d="M612.5,621V630" stroke="#10e010" stroke-width="1.6"/>
<text x="609.5" y="619.5" font-size="8" font-weight="bold" fill="#20e020">y</text>
<g stroke-linejoin="round" stroke-linecap="round">
<path d="M743.6,251.0 L750.0,250.0 L756.4,247.9 L762.0,245.0 L767.1,241.4 L771.5,237.5 L775.7,232.9 L780.0,229.0 L784.3,225.4 L790.0,222.5 L797.1,220.0 L803.0,218.0 L810.0,216.8 L823.0,216.3 L835.7,216.8 L840.0,218.0 L844.3,220.0 L848.5,223.5 L852.9,227.5 L857.0,230.0 L861.4,231.8 L866.0,232.5 L870.0,232.9 L872.0,290.0 L760.0,305.0 L752.0,340.0Z" fill="#737373"/>
<path d="M748,252.3125L751,330M758.6,248.76071428571427L761.6,330M768.2,242.42499999999998L771.2,330M777.9,232.90465116279074L780.9,330M786.4,226.33157894736843L789.4,330M808.9,218.98857142857145L811.9,330M817.5,218.51153846153846L820.5,330M838.9,219.69302325581396L841.9,330M846.4,223.75L849.4,330M855,230.78048780487805L858,330M862.5,233.96739130434784L865.5,330" fill="none" stroke="#5ccff0" stroke-width="1"/>
<path d="M743.6,251.0 L750.0,250.0 L756.4,247.9 L762.0,245.0 L767.1,241.4 L771.5,237.5 L775.7,232.9 L780.0,229.0 L784.3,225.4 L790.0,222.5 L797.1,220.0 L803.0,218.0 L810.0,216.8 L823.0,216.3 L835.7,216.8 L840.0,218.0 L844.3,220.0 L848.5,223.5 L852.9,227.5 L857.0,230.0 L861.4,231.8 L866.0,232.5 L870.0,232.9" fill="none" stroke="#5ccff0" stroke-width="3"/>
<path d="M750.0,254.0 L756.4,251.9 L762.0,249.0 L767.1,245.4 L771.5,241.5 L775.7,236.9 L780.0,233.0 L784.3,229.4 L790.0,226.5 L797.1,224.0 L803.0,222.0 L810.0,220.8 L823.0,220.3 L835.7,220.8 L840.0,222.0 L844.3,224.0 L848.5,227.5 L852.9,231.5 L857.0,234.0 L861.4,235.8 L866.0,236.5" fill="none" stroke="#5ccff0" stroke-width="1"/>
<path d="M866.8,226.0 L875.0,224.0 L883.0,227.0 L884.0,286.0 L870.0,290.0Z" fill="#767676"/>
<path d="M867,228L870,290M873,229L876,289M876,229V289M883,228L884,286" fill="none" stroke="#5ccff0" stroke-width="1"/>
<path d="M866.8,226.5 L875.0,224.0 L883.0,227.5 L876.0,229.5Z" fill="#646464" stroke="#5ccff0" stroke-width="1.5"/>
<path d="M866.8,226.5L876,229.5" stroke="#e8e8e8" stroke-width="1.2" fill="none"/>
<path d="M727.8,250.0 L736.7,247.8 L744.4,250.0 L755.6,360.0 L744.4,364.4 L738.9,361.0Z" fill="#6c6c6c"/>
<path d="M732.2,253.3 L744.4,250.0 L755.6,360.0 L744.4,364.4Z" fill="#7c7c7c"/>
<path d="M727.8,251L738.9,361M732.2,253.3L744.4,364.4M735,253L746,363M744.4,251L755.6,360M740,252L751,362M729.5,252L741,362" fill="none" stroke="#5ccff0" stroke-width="1"/>
<path d="M727.8,250.0 L736.7,247.8 L744.4,250.0 L732.2,253.3Z" fill="#646464" stroke="#5ccff0" stroke-width="1.5"/>
<path d="M727.8,250L732.2,253.3" stroke="#e8e8e8" stroke-width="1.2" fill="none"/>
<path d="M738.9,361L744.4,364.4L755.6,360" fill="none" stroke="#e6eef0" stroke-width="1.2"/>
<path d="M753.0,339.0 L773.0,347.0 L773.0,355.0 L753.0,347.0Z" fill="#7a7a7a" stroke="#5ccff0" stroke-width="1"/>
<path d="M753,347L773,355" stroke="#e0e0e0" stroke-width="1" fill="none"/>
<path d="M760.0,302.5 L784.0,296.0 L778.0,313.0 L776.0,349.0 L761.5,342.0Z" fill="#545454"/>
<path d="M760.0,302.5 L782.0,295.5 L796.0,306.8 L778.0,313.0 L761.0,309.0Z" fill="#6c6c6c"/>
<path d="M760,302.5L782,295.5M761,309L778,304M760,302.5L761.5,342L776,349M766,304L768,344M760.5,308L777,313.5" fill="none" stroke="#5ccff0" stroke-width="1"/>
<path d="M782.2,291.6 L788.0,286.0 L795.5,281.4 L803.0,278.0 L810.7,275.3 L820.0,273.2 L831.1,272.2 L843.3,273.2 L856.6,277.3 L864.0,282.0 L871.8,289.5 L871.8,290.5 L840.0,299.0 L815.0,304.0 L795.5,306.8 L789.0,300.0 L782.2,293.6Z" fill="#6e6e6e"/>
<path d="M834.0,272.5L871.8,290.5M834.0,272.5L866.9,291.8M834.0,272.5L862.1,293.1M834.0,272.5L857.2,294.4M834.0,272.5L852.4,295.7M834.0,272.5L847.5,297.0M834.0,272.5L842.6,298.3M834.0,272.5L837.7,299.5M834.0,272.5L832.8,300.4M834.0,272.5L827.9,301.4M834.0,272.5L822.9,302.4M834.0,272.5L818.0,303.4M834.0,272.5L813.1,304.3M834.0,272.5L808.1,305.0M834.0,272.5L803.1,305.7M834.0,272.5L798.1,306.4M834.0,272.5L793.9,305.1M834.0,272.5L790.4,301.4M834.0,272.5L786.8,297.9M834.0,272.5L783.1,294.5M834.0,272.5L783.5,290.4M834.0,272.5L787.1,286.9M834.0,272.5L791.2,284.0M834.0,272.5L795.5,281.4M841.6,276.1 L840.6,276.3 L839.7,276.6 L838.8,276.8 L837.8,277.1 L836.9,277.3 L836.0,277.6 L835.0,277.8 L834.1,278.0 L833.1,278.2 L832.2,278.4 L831.3,278.6 L830.3,278.8 L829.4,278.9 L828.4,279.1 L827.4,279.2 L826.5,279.3 L825.8,278.8 L825.1,278.1 L824.4,277.4 L823.7,276.8 L824.0,276.0 L824.7,275.3 L825.5,274.8 L826.3,274.3M848.4,279.3 L846.6,279.8 L844.8,280.3 L843.1,280.8 L841.3,281.2 L839.5,281.7 L837.7,282.2 L836.0,282.6 L834.2,283.0 L832.4,283.4 L830.6,283.7 L828.8,284.1 L827.0,284.4 L825.2,284.7 L823.4,285.0 L821.5,285.2 L819.7,285.5 L818.4,284.5 L817.1,283.2 L815.8,281.9 L814.4,280.6 L815.0,279.1 L816.3,277.9 L817.8,276.8 L819.4,275.9M854.8,282.4 L852.2,283.1 L849.7,283.8 L847.1,284.5 L844.5,285.1 L842.0,285.8 L839.4,286.5 L836.8,287.2 L834.2,287.7 L831.6,288.2 L829.0,288.7 L826.4,289.2 L823.8,289.8 L821.2,290.2 L818.6,290.5 L816.0,290.9 L813.4,291.3 L811.4,289.8 L809.5,287.9 L807.6,286.1 L805.7,284.3 L806.5,282.1 L808.4,280.2 L810.6,278.8 L812.8,277.4M860.5,285.1 L857.2,286.0 L853.9,286.8 L850.7,287.7 L847.4,288.6 L844.2,289.5 L840.9,290.3 L837.6,291.2 L834.3,291.8 L831.0,292.5 L827.7,293.2 L824.4,293.8 L821.1,294.5 L817.7,295.0 L814.4,295.5 L811.1,295.9 L807.7,296.4 L805.2,294.6 L802.9,292.1 L800.4,289.8 L798.0,287.5 L798.9,284.7 L801.4,282.4 L804.2,280.5 L807.0,278.7M865.8,287.6 L861.8,288.7 L857.9,289.7 L854.0,290.8 L850.1,291.8 L846.2,292.8 L842.3,293.9 L838.4,294.9 L834.4,295.7 L830.4,296.5 L826.4,297.3 L822.5,298.1 L818.5,298.9 L814.5,299.5 L810.5,300.0 L806.5,300.6 L802.5,301.2 L799.4,299.0 L796.6,296.0 L793.7,293.2 L790.7,290.5 L791.9,287.1 L794.8,284.3 L798.2,282.1 L801.7,280.0M869.9,289.6 L865.5,290.8 L861.1,292.0 L856.6,293.1 L852.2,294.3 L847.8,295.5 L843.4,296.7 L838.9,297.8 L834.4,298.7 L829.9,299.6 L825.4,300.5 L821.0,301.4 L816.5,302.3 L811.9,303.0 L807.4,303.7 L802.9,304.3 L798.3,305.0 L794.9,302.4 L791.7,299.1 L788.4,296.0 L785.1,292.8 L786.4,289.1 L789.7,285.9 L793.5,283.3 L797.4,281.0" fill="none" stroke="#5ccff0" stroke-width="0.9"/>
<path d="M782.2,291.6 L788.0,286.0 L795.5,281.4 L803.0,278.0 L810.7,275.3 L820.0,273.2 L831.1,272.2 L843.3,273.2 L856.6,277.3 L864.0,282.0 L871.8,289.5" fill="none" stroke="#5ccff0" stroke-width="1.8"/>
<path d="M782.2,293.6L789,300L795.5,306.8" fill="none" stroke="#e8e8e8" stroke-width="1.2"/>
<path d="M860.0,279.0 L884.0,280.0 L886.0,288.0 L864.0,292.0Z" fill="#6c6c6c" stroke="#5ccff0" stroke-width="1"/>
<path d="M884.0,284.0 L904.8,283.8 L927.6,291.4 L960.0,303.8 L992.0,316.0 L1010.0,322.0 L914.0,384.0 L866.0,356.0 L820.0,333.0 L778.0,313.0Z" fill="#727272"/>
<path d="M884.0,284.0 L879.6,285.2 L875.2,286.4 L870.7,287.6 L866.3,288.8 L861.9,290.0 L857.5,291.2 L853.1,292.4 L848.7,293.6 L844.2,294.8 L839.8,296.0 L835.4,297.2 L831.0,298.4 L826.5,299.5 L822.1,300.7 L817.7,301.8 L813.2,303.0 L808.8,304.2 L804.4,305.3 L800.0,306.5 L795.5,307.7 L791.2,309.1 L786.8,310.4 L782.4,311.7 L778.0,313.0M890.6,283.9 L886.2,285.3 L881.8,286.6 L877.4,288.0 L873.0,289.3 L868.6,290.7 L864.2,292.1 L859.8,293.4 L855.4,294.8 L851.0,296.1 L846.6,297.4 L842.2,298.8 L837.8,300.1 L833.4,301.4 L829.0,302.7 L824.5,304.0 L820.1,305.3 L815.7,306.6 L811.3,307.9 L806.9,309.2 L802.5,310.5 L798.1,312.0 L793.7,313.4 L789.3,314.9 L784.9,316.3M897.3,283.9 L892.9,285.4 L888.5,286.9 L884.1,288.4 L879.7,289.9 L875.4,291.4 L871.0,292.9 L866.6,294.4 L862.2,295.9 L857.8,297.4 L853.4,298.8 L849.0,300.3 L844.6,301.7 L840.2,303.2 L835.8,304.6 L831.4,306.1 L827.0,307.5 L822.6,309.0 L818.2,310.4 L813.8,311.8 L809.4,313.3 L805.0,314.9 L800.6,316.5 L796.2,318.0 L791.9,319.6M903.9,283.8 L899.5,285.5 L895.2,287.1 L890.8,288.8 L886.4,290.4 L882.1,292.0 L877.7,293.7 L873.3,295.3 L869.0,297.0 L864.6,298.6 L860.2,300.2 L855.8,301.8 L851.4,303.4 L847.1,305.0 L842.7,306.6 L838.3,308.2 L833.9,309.8 L829.5,311.4 L825.1,312.9 L820.7,314.5 L816.3,316.1 L811.9,317.8 L807.5,319.5 L803.2,321.2 L798.8,322.9M910.3,285.6 L905.9,287.3 L901.6,289.1 L897.2,290.8 L892.9,292.5 L888.6,294.2 L884.2,295.9 L879.9,297.6 L875.6,299.4 L871.2,301.0 L866.8,302.7 L862.5,304.4 L858.1,306.1 L853.8,307.7 L849.4,309.4 L845.0,311.0 L840.7,312.7 L836.3,314.3 L831.9,315.9 L827.5,317.5 L823.1,319.2 L818.8,321.0 L814.4,322.7 L810.1,324.5 L805.7,326.2M916.6,287.7 L912.2,289.5 L907.9,291.3 L903.6,293.0 L899.3,294.8 L895.0,296.6 L890.7,298.4 L886.4,300.1 L882.1,301.9 L877.8,303.7 L873.4,305.4 L869.1,307.1 L864.8,308.8 L860.4,310.5 L856.1,312.3 L851.8,314.0 L847.4,315.7 L843.1,317.3 L838.7,319.0 L834.3,320.7 L830.0,322.4 L825.7,324.2 L821.3,325.9 L817.0,327.7 L812.7,329.5M922.8,289.8 L918.6,291.6 L914.3,293.5 L910.0,295.3 L905.7,297.1 L901.5,299.0 L897.2,300.8 L892.9,302.6 L888.6,304.5 L884.3,306.3 L880.0,308.1 L875.7,309.8 L871.4,311.6 L867.1,313.4 L862.8,315.1 L858.5,316.9 L854.2,318.6 L849.8,320.4 L845.5,322.1 L841.2,323.8 L836.8,325.5 L832.5,327.4 L828.2,329.2 L823.9,331.0 L819.6,332.8M929.1,292.0 L924.9,293.9 L920.6,295.8 L916.4,297.7 L912.1,299.6 L907.9,301.4 L903.7,303.3 L899.4,305.2 L895.2,307.1 L890.9,309.0 L886.6,310.8 L882.3,312.6 L878.0,314.5 L873.8,316.3 L869.5,318.1 L865.2,319.9 L860.9,321.7 L856.6,323.5 L852.3,325.2 L847.9,327.0 L843.6,328.8 L839.3,330.7 L835.0,332.5 L830.7,334.4 L826.5,336.2M935.3,294.4 L931.1,296.3 L926.9,298.2 L922.7,300.2 L918.5,302.1 L914.3,304.1 L910.0,306.0 L905.8,308.0 L901.6,309.9 L897.4,311.8 L893.1,313.7 L888.9,315.6 L884.6,317.4 L880.4,319.3 L876.1,321.2 L871.9,323.1 L867.6,324.9 L863.3,326.7 L859.0,328.5 L854.7,330.3 L850.4,332.1 L846.1,334.0 L841.9,335.9 L837.6,337.8 L833.3,339.7M941.5,296.7 L937.3,298.7 L933.2,300.7 L929.0,302.7 L924.8,304.7 L920.6,306.7 L916.4,308.7 L912.3,310.7 L908.1,312.7 L903.9,314.6 L899.6,316.6 L895.4,318.5 L891.2,320.4 L887.0,322.3 L882.8,324.2 L878.5,326.2 L874.3,328.1 L870.0,329.9 L865.7,331.7 L861.5,333.6 L857.2,335.4 L852.9,337.3 L848.7,339.3 L844.4,341.2 L840.2,343.1M947.7,299.1 L943.6,301.1 L939.4,303.2 L935.3,305.2 L931.1,307.3 L927.0,309.3 L922.8,311.4 L918.7,313.4 L914.5,315.5 L910.3,317.5 L906.2,319.4 L902.0,321.4 L897.8,323.4 L893.6,325.4 L889.4,327.3 L885.2,329.3 L881.0,331.2 L876.7,333.1 L872.5,335.0 L868.2,336.8 L864.0,338.7 L859.7,340.7 L855.5,342.6 L851.3,344.6 L847.0,346.5M953.9,301.5 L949.8,303.6 L945.7,305.7 L941.6,307.8 L937.5,309.9 L933.3,312.0 L929.2,314.1 L925.1,316.2 L921.0,318.3 L916.8,320.3 L912.7,322.3 L908.5,324.3 L904.3,326.4 L900.2,328.4 L896.0,330.4 L891.9,332.4 L887.7,334.4 L883.4,336.3 L879.2,338.2 L875.0,340.1 L870.8,342.1 L866.5,344.0 L862.3,346.0 L858.1,348.0 L853.9,350.0M960.1,303.8 L956.0,306.0 L952.0,308.1 L947.9,310.3 L943.8,312.5 L939.7,314.6 L935.6,316.8 L931.5,318.9 L927.4,321.0 L923.3,323.1 L919.2,325.2 L915.1,327.3 L910.9,329.3 L906.8,331.4 L902.7,333.5 L898.5,335.5 L894.4,337.5 L890.2,339.5 L885.9,341.4 L881.7,343.4 L877.5,345.4 L873.4,347.4 L869.2,349.4 L865.0,351.4 L860.8,353.4M966.3,306.2 L962.3,308.4 L958.2,310.6 L954.2,312.8 L950.1,315.0 L946.1,317.3 L942.0,319.5 L938.0,321.7 L933.9,323.9 L929.8,326.0 L925.7,328.1 L921.6,330.2 L917.5,332.3 L913.4,334.5 L909.3,336.6 L905.1,338.7 L901.0,340.8 L896.8,342.8 L892.6,344.8 L888.5,346.7 L884.3,348.8 L880.1,350.8 L875.9,352.8 L871.8,354.9 L867.6,356.9M972.5,308.6 L968.5,310.9 L964.5,313.1 L960.4,315.4 L956.4,317.7 L952.4,320.0 L948.3,322.2 L944.3,324.5 L940.3,326.8 L936.2,329.0 L932.1,331.2 L928.0,333.4 L923.9,335.5 L919.8,337.7 L915.8,339.9 L911.7,342.1 L907.6,344.2 L903.4,346.3 L899.2,348.3 L895.0,350.4 L890.9,352.4 L886.7,354.5 L882.5,356.6 L878.4,358.7 L874.2,360.8M978.7,310.9 L974.7,313.3 L970.7,315.6 L966.7,318.0 L962.7,320.3 L958.7,322.7 L954.7,325.0 L950.7,327.4 L946.7,329.7 L942.6,332.0 L938.5,334.2 L934.5,336.5 L930.4,338.7 L926.3,341.0 L922.3,343.2 L918.2,345.5 L914.1,347.7 L909.9,349.8 L905.8,351.9 L901.6,354.0 L897.4,356.1 L893.3,358.2 L889.1,360.4 L885.0,362.5 L880.8,364.7M984.9,313.3 L980.9,315.7 L977.0,318.1 L973.0,320.6 L969.0,323.0 L965.0,325.4 L961.0,327.8 L957.0,330.2 L953.0,332.6 L949.0,335.0 L944.9,337.3 L940.9,339.6 L936.8,341.9 L932.8,344.2 L928.7,346.5 L924.7,348.9 L920.6,351.1 L916.5,353.3 L912.3,355.4 L908.2,357.6 L904.0,359.8 L899.9,362.0 L895.8,364.2 L891.6,366.3 L887.5,368.5M991.1,315.7 L987.2,318.2 L983.2,320.6 L979.2,323.1 L975.3,325.6 L971.3,328.1 L967.4,330.6 L963.4,333.1 L959.4,335.6 L955.4,337.9 L951.4,340.3 L947.3,342.7 L943.3,345.1 L939.3,347.5 L935.2,349.9 L931.2,352.2 L927.2,354.6 L923.0,356.8 L918.9,359.0 L914.8,361.2 L910.6,363.4 L906.5,365.7 L902.4,367.9 L898.2,370.2 L894.1,372.4M997.4,317.8 L993.5,320.4 L989.5,322.9 L985.6,325.5 L981.6,328.1 L977.7,330.6 L973.8,333.2 L969.8,335.8 L965.9,338.3 L961.8,340.8 L957.8,343.3 L953.8,345.7 L949.8,348.2 L945.8,350.6 L941.8,353.1 L937.8,355.5 L933.7,358.0 L929.6,360.2 L925.5,362.5 L921.3,364.8 L917.2,367.1 L913.1,369.4 L909.0,371.7 L904.9,374.0 L900.7,376.3M1003.7,319.9 L999.8,322.6 L995.9,325.2 L991.9,327.9 L988.0,330.5 L984.1,333.2 L980.2,335.8 L976.3,338.5 L972.3,341.1 L968.3,343.6 L964.3,346.1 L960.3,348.7 L956.3,351.2 L952.3,353.8 L948.3,356.3 L944.3,358.8 L940.3,361.3 L936.2,363.7 L932.1,366.0 L927.9,368.4 L923.8,370.7 L919.7,373.1 L915.6,375.4 L911.5,377.8 L907.4,380.1M1010.0,322.0 L1006.1,324.7 L1002.2,327.5 L998.3,330.2 L994.4,332.9 L990.5,335.7 L986.6,338.4 L982.7,341.1 L978.8,343.8 L974.8,346.4 L970.8,349.0 L966.8,351.7 L962.8,354.3 L958.8,356.9 L954.9,359.5 L950.9,362.1 L946.9,364.7 L942.7,367.1 L938.6,369.5 L934.5,371.9 L930.4,374.3 L926.3,376.8 L922.2,379.2 L918.1,381.6 L914.0,384.0M884.0,284.0 L889.5,283.9 L895.1,283.9 L900.6,283.8 L906.1,284.2 L911.3,286.0 L916.6,287.7 L921.8,289.5 L927.0,291.2 L932.2,293.2 L937.4,295.1 L942.6,297.1 L947.7,299.1 L952.9,301.1 L958.0,303.1 L963.2,305.0 L968.4,307.0 L973.6,309.0 L978.7,310.9 L983.9,312.9 L989.1,314.9 L994.3,316.8 L999.5,318.5 L1004.8,320.3 L1010.0,322.0M876.9,285.9 L882.5,286.1 L888.0,286.2 L893.6,286.4 L899.1,286.9 L904.4,288.7 L909.7,290.6 L914.9,292.4 L920.2,294.2 L925.5,296.2 L930.7,298.3 L935.9,300.3 L941.1,302.4 L946.3,304.4 L951.5,306.5 L956.7,308.5 L961.9,310.6 L967.1,312.6 L972.3,314.7 L977.5,316.8 L982.7,318.8 L987.9,320.8 L993.2,322.7 L998.5,324.5 L1003.8,326.4M869.9,287.9 L875.4,288.2 L881.0,288.5 L886.6,288.9 L892.1,289.6 L897.4,291.5 L902.8,293.4 L908.1,295.3 L913.4,297.2 L918.7,299.3 L923.9,301.4 L929.2,303.5 L934.4,305.7 L939.7,307.8 L945.0,309.9 L950.2,312.0 L955.4,314.1 L960.7,316.3 L965.9,318.5 L971.1,320.6 L976.4,322.8 L981.6,324.8 L986.9,326.8 L992.2,328.8 L997.5,330.7M862.8,289.8 L868.4,290.3 L874.0,290.9 L879.6,291.4 L885.1,292.3 L890.5,294.3 L895.9,296.2 L901.3,298.2 L906.6,300.2 L911.9,302.4 L917.2,304.6 L922.5,306.7 L927.8,308.9 L933.1,311.1 L938.4,313.3 L943.7,315.5 L949.0,317.7 L954.2,320.0 L959.5,322.2 L964.8,324.5 L970.0,326.7 L975.3,328.9 L980.6,331.0 L985.9,333.0 L991.3,335.1M855.7,291.7 L861.3,292.4 L867.0,293.2 L872.6,293.9 L878.2,295.0 L883.6,297.0 L889.0,299.1 L894.4,301.1 L899.8,303.2 L905.2,305.5 L910.5,307.7 L915.8,310.0 L921.2,312.2 L926.5,314.5 L931.9,316.7 L937.2,319.0 L942.5,321.3 L947.8,323.6 L953.1,326.0 L958.4,328.3 L963.7,330.7 L969.0,332.9 L974.3,335.1 L979.7,337.3 L985.0,339.5M848.7,293.6 L854.3,294.6 L859.9,295.5 L865.6,296.4 L871.2,297.6 L876.6,299.8 L882.1,301.9 L887.6,304.0 L893.0,306.2 L898.4,308.5 L903.8,310.8 L909.1,313.1 L914.5,315.5 L919.9,317.8 L925.3,320.1 L930.7,322.4 L936.0,324.8 L941.3,327.3 L946.7,329.7 L952.0,332.1 L957.3,334.6 L962.6,337.0 L968.0,339.2 L973.4,341.5 L978.8,343.8M841.6,295.6 L847.2,296.7 L852.9,297.8 L858.6,298.9 L864.2,300.3 L869.7,302.5 L875.2,304.7 L880.7,306.9 L886.1,309.1 L891.6,311.5 L897.0,313.9 L902.4,316.3 L907.8,318.7 L913.3,321.0 L918.7,323.4 L924.1,325.8 L929.5,328.3 L934.8,330.8 L940.2,333.3 L945.5,335.8 L950.8,338.4 L956.2,340.8 L961.6,343.2 L967.0,345.6 L972.4,348.0M834.5,297.4 L840.2,298.8 L845.9,300.1 L851.5,301.4 L857.2,302.9 L862.7,305.2 L868.2,307.5 L873.8,309.7 L879.3,312.0 L884.7,314.5 L890.2,316.9 L895.7,319.4 L901.1,321.8 L906.6,324.3 L912.0,326.7 L917.5,329.1 L922.9,331.7 L928.3,334.3 L933.6,336.9 L939.0,339.5 L944.4,342.1 L949.8,344.7 L955.2,347.2 L960.6,349.7 L966.0,352.2M827.4,299.3 L833.1,300.8 L838.8,302.3 L844.5,303.8 L850.2,305.5 L855.7,307.9 L861.3,310.2 L866.9,312.5 L872.4,314.9 L877.9,317.4 L883.4,319.9 L888.9,322.4 L894.4,325.0 L899.9,327.5 L905.4,330.0 L910.9,332.5 L916.3,335.1 L921.7,337.8 L927.1,340.5 L932.5,343.2 L937.9,345.9 L943.3,348.6 L948.8,351.2 L954.2,353.8 L959.6,356.4M820.3,301.2 L826.0,302.8 L831.8,304.5 L837.5,306.2 L843.2,308.1 L848.8,310.5 L854.4,312.9 L860.0,315.4 L865.6,317.8 L871.1,320.4 L876.6,323.0 L882.2,325.5 L887.7,328.1 L893.2,330.7 L898.8,333.3 L904.3,335.8 L909.8,338.5 L915.2,341.3 L920.6,344.1 L926.0,346.9 L931.5,349.7 L936.9,352.4 L942.4,355.1 L947.8,357.8 L953.3,360.5M813.2,303.0 L819.0,304.9 L824.7,306.8 L830.4,308.7 L836.2,310.7 L841.8,313.2 L847.4,315.7 L853.1,318.2 L858.7,320.7 L864.3,323.3 L869.8,326.0 L875.4,328.6 L881.0,331.2 L886.6,333.9 L892.1,336.5 L897.7,339.1 L903.2,341.9 L908.6,344.8 L914.1,347.7 L919.5,350.6 L925.0,353.4 L930.4,356.3 L935.9,359.1 L941.4,361.9 L946.9,364.7M806.2,304.9 L811.9,306.9 L817.6,309.0 L823.4,311.1 L829.1,313.2 L834.8,315.8 L840.4,318.3 L846.1,320.9 L851.7,323.5 L857.4,326.2 L863.0,328.8 L868.6,331.5 L874.2,334.2 L879.8,336.9 L885.4,339.6 L891.0,342.3 L896.5,345.1 L902.0,348.1 L907.4,351.0 L912.9,354.0 L918.4,356.9 L923.8,359.9 L929.3,362.8 L934.8,365.6 L940.3,368.5M799.1,306.7 L804.8,309.0 L810.6,311.2 L816.3,313.5 L822.1,315.8 L827.8,318.4 L833.5,321.0 L839.2,323.6 L844.8,326.3 L850.5,329.0 L856.1,331.7 L861.7,334.5 L867.4,337.2 L873.0,339.9 L878.6,342.7 L884.3,345.4 L889.8,348.3 L895.3,351.4 L900.8,354.4 L906.3,357.4 L911.7,360.5 L917.2,363.5 L922.7,366.4 L928.2,369.4 L933.7,372.4M792.0,308.8 L797.8,311.2 L803.6,313.6 L809.3,316.0 L815.1,318.5 L820.8,321.2 L826.5,323.8 L832.2,326.5 L837.9,329.2 L843.6,332.0 L849.3,334.7 L854.9,337.5 L860.6,340.3 L866.3,343.1 L871.9,345.9 L877.6,348.6 L883.1,351.6 L888.6,354.7 L894.1,357.8 L899.6,360.9 L905.1,364.0 L910.6,367.1 L916.1,370.1 L921.6,373.2 L927.1,376.3M785.0,310.9 L790.8,313.5 L796.6,316.1 L802.3,318.6 L808.1,321.2 L813.8,324.0 L819.6,326.7 L825.3,329.4 L831.0,332.1 L836.7,335.0 L842.4,337.8 L848.1,340.6 L853.8,343.4 L859.5,346.2 L865.2,349.1 L870.9,351.9 L876.5,354.9 L882.0,358.1 L887.5,361.2 L893.0,364.4 L898.5,367.6 L904.0,370.7 L909.5,373.8 L915.1,377.0 L920.6,380.1M778.0,313.0 L783.8,315.8 L789.6,318.5 L795.3,321.3 L801.1,324.0 L806.9,326.8 L812.7,329.5 L818.4,332.3 L824.2,335.1 L829.9,337.9 L835.6,340.8 L841.3,343.7 L847.0,346.5 L852.8,349.4 L858.5,352.2 L864.2,355.1 L869.8,358.2 L875.3,361.4 L880.8,364.7 L886.4,367.9 L891.9,371.1 L897.4,374.3 L902.9,377.6 L908.5,380.8 L914.0,384.0" fill="none" stroke="#5ccff0" stroke-width="1"/>
<path d="M778.0,313.0 L820.0,333.0 L866.0,356.0 L914.0,384.0 L915.0,478.0 L906.4,475.7 L893.3,466.0 L872.0,447.0 L850.5,430.5 L831.4,416.0 L820.0,409.0 L810.0,404.0 L800.0,398.0 L791.0,390.0 L782.0,385.0 L774.0,373.0 L771.0,361.0Z" fill="#666666"/>
<path d="M778.0,313.0 L777.5,315.0 L776.9,316.9 L776.4,318.9 L775.9,320.9 L775.3,322.8 L774.8,324.8 L774.3,326.7 L773.7,328.7 L773.2,330.7 L772.6,332.6 L772.1,334.6 L771.9,336.6 L771.9,338.6 L771.8,340.7 L771.7,342.7 L771.6,344.7 L771.5,346.8 L771.5,348.8 L771.4,350.8 L771.3,352.9 L771.2,354.9 L771.2,356.9 L771.1,359.0 L771.0,361.0M779.5,313.7 L779.0,315.8 L778.4,317.8 L777.8,319.8 L777.2,321.8 L776.7,323.8 L776.1,325.8 L775.5,327.9 L774.9,329.9 L774.4,331.9 L773.8,333.9 L773.2,335.9 L773.0,338.0 L772.9,340.1 L772.8,342.2 L772.6,344.3 L772.5,346.4 L772.4,348.4 L772.3,350.5 L772.1,352.6 L772.0,354.7 L771.9,356.8 L771.8,358.9 L771.6,361.0 L771.5,363.1M781.9,314.9 L781.3,317.0 L780.7,319.1 L780.0,321.2 L779.4,323.3 L778.7,325.4 L778.1,327.5 L777.5,329.6 L776.8,331.7 L776.2,333.8 L775.6,335.9 L774.9,338.0 L774.6,340.2 L774.4,342.3 L774.3,344.5 L774.1,346.7 L773.9,348.9 L773.7,351.0 L773.5,353.2 L773.3,355.4 L773.1,357.5 L772.9,359.7 L772.7,361.9 L772.5,364.1 L772.3,366.2M784.8,316.2 L784.1,318.4 L783.4,320.6 L782.7,322.9 L782.0,325.1 L781.2,327.3 L780.5,329.5 L779.8,331.7 L779.1,333.9 L778.4,336.1 L777.7,338.3 L777.0,340.5 L776.6,342.8 L776.3,345.0 L776.1,347.3 L775.8,349.6 L775.5,351.9 L775.2,354.1 L774.9,356.4 L774.7,358.7 L774.4,361.0 L774.1,363.2 L773.8,365.5 L773.5,367.8 L773.3,370.0M788.0,317.8 L787.2,320.1 L786.5,322.4 L785.7,324.7 L784.9,327.0 L784.1,329.3 L783.4,331.7 L782.6,334.0 L781.8,336.3 L781.0,338.6 L780.3,340.9 L779.5,343.2 L779.1,345.6 L778.7,348.0 L778.3,350.4 L778.0,352.7 L777.6,355.1 L777.3,357.5 L776.9,359.9 L776.6,362.3 L776.2,364.6 L775.8,367.0 L775.5,369.4 L775.1,371.8 L774.8,374.1M791.5,319.4 L790.7,321.9 L789.9,324.3 L789.1,326.7 L788.3,329.1 L787.5,331.5 L786.7,333.9 L785.9,336.3 L785.1,338.8 L784.3,341.2 L783.5,343.6 L782.7,346.0 L782.2,348.5 L781.8,350.9 L781.4,353.4 L781.0,355.9 L780.6,358.4 L780.2,360.8 L779.8,363.3 L779.4,365.8 L779.0,368.3 L778.6,370.7 L778.2,373.2 L777.8,375.7 L777.4,378.2M795.3,321.2 L794.5,323.8 L793.7,326.3 L792.8,328.8 L792.0,331.3 L791.2,333.8 L790.3,336.4 L789.5,338.9 L788.7,341.4 L787.8,343.9 L787.0,346.4 L786.2,349.0 L785.6,351.5 L785.2,354.1 L784.8,356.7 L784.3,359.3 L783.9,361.8 L783.4,364.4 L783.0,367.0 L782.5,369.6 L782.1,372.2 L781.7,374.7 L781.2,377.3 L780.8,379.9 L780.3,382.5M799.3,323.2 L798.5,325.8 L797.7,328.3 L796.8,330.9 L796.0,333.5 L795.2,336.1 L794.3,338.7 L793.5,341.3 L792.7,343.9 L791.8,346.5 L791.0,349.1 L790.2,351.7 L789.7,354.3 L789.2,357.0 L788.7,359.7 L788.3,362.3 L787.8,365.0 L787.4,367.6 L786.9,370.3 L786.5,372.9 L786.0,375.6 L785.5,378.2 L785.1,380.9 L784.6,383.5 L784.2,386.2M803.5,325.2 L802.8,327.8 L802.0,330.4 L801.2,333.1 L800.4,335.7 L799.6,338.3 L798.8,340.9 L798.0,343.6 L797.2,346.2 L796.5,348.8 L795.7,351.5 L794.9,354.1 L794.4,356.8 L794.0,359.5 L793.5,362.1 L793.1,364.8 L792.7,367.5 L792.2,370.2 L791.8,372.9 L791.4,375.6 L790.9,378.3 L790.5,380.9 L790.1,383.6 L789.6,386.3 L789.2,389.0M807.9,327.3 L807.2,330.0 L806.4,332.7 L805.7,335.3 L804.9,338.0 L804.1,340.7 L803.4,343.4 L802.6,346.1 L801.8,348.8 L801.1,351.5 L800.3,354.2 L799.6,356.9 L799.1,359.6 L798.6,362.4 L798.2,365.2 L797.8,367.9 L797.4,370.7 L797.0,373.4 L796.5,376.2 L796.1,378.9 L795.7,381.7 L795.3,384.4 L794.8,387.2 L794.4,389.9 L794.0,392.7M812.5,329.4 L811.8,332.2 L811.0,335.0 L810.3,337.8 L809.5,340.6 L808.8,343.3 L808.0,346.1 L807.3,348.9 L806.5,351.7 L805.8,354.5 L805.0,357.2 L804.3,360.0 L803.8,362.8 L803.4,365.7 L803.0,368.5 L802.5,371.3 L802.1,374.2 L801.7,377.0 L801.2,379.8 L800.8,382.7 L800.4,385.5 L800.0,388.3 L799.5,391.2 L799.1,394.0 L798.7,396.8M817.3,331.7 L816.6,334.5 L815.8,337.4 L815.1,340.2 L814.4,343.0 L813.7,345.9 L813.0,348.7 L812.3,351.6 L811.6,354.4 L810.9,357.2 L810.1,360.1 L809.4,362.9 L809.0,365.8 L808.6,368.7 L808.2,371.6 L807.7,374.4 L807.3,377.3 L806.9,380.2 L806.5,383.1 L806.1,386.0 L805.7,388.9 L805.3,391.8 L804.9,394.7 L804.5,397.6 L804.1,400.4M822.1,334.1 L821.5,337.0 L820.8,339.8 L820.1,342.7 L819.5,345.6 L818.8,348.5 L818.1,351.4 L817.5,354.3 L816.8,357.1 L816.2,360.0 L815.5,362.9 L814.8,365.8 L814.4,368.7 L814.0,371.6 L813.6,374.6 L813.3,377.5 L812.9,380.4 L812.5,383.4 L812.1,386.3 L811.7,389.2 L811.3,392.2 L811.0,395.1 L810.6,398.0 L810.2,401.0 L809.8,403.9M827.1,336.6 L826.5,339.5 L825.9,342.4 L825.3,345.3 L824.7,348.2 L824.1,351.1 L823.5,354.0 L822.9,356.9 L822.3,359.8 L821.7,362.8 L821.1,365.7 L820.5,368.6 L820.1,371.5 L819.8,374.5 L819.4,377.4 L819.1,380.4 L818.7,383.4 L818.4,386.3 L818.0,389.3 L817.7,392.2 L817.4,395.2 L817.0,398.1 L816.7,401.1 L816.3,404.0 L816.0,407.0M832.3,339.1 L831.7,342.1 L831.2,345.0 L830.6,348.0 L830.1,350.9 L829.5,353.9 L829.0,356.8 L828.4,359.7 L827.9,362.7 L827.3,365.6 L826.8,368.6 L826.2,371.5 L825.9,374.5 L825.6,377.5 L825.3,380.5 L825.0,383.5 L824.7,386.5 L824.4,389.5 L824.1,392.4 L823.8,395.4 L823.5,398.4 L823.2,401.4 L822.9,404.4 L822.5,407.4 L822.2,410.4M837.5,341.8 L837.0,344.8 L836.5,347.8 L836.0,350.7 L835.5,353.7 L835.0,356.7 L834.5,359.7 L834.0,362.7 L833.5,365.7 L833.0,368.7 L832.5,371.7 L832.0,374.7 L831.7,377.7 L831.5,380.8 L831.2,383.8 L830.9,386.9 L830.6,389.9 L830.4,392.9 L830.1,396.0 L829.8,399.0 L829.5,402.0 L829.3,405.1 L829.0,408.1 L828.7,411.2 L828.5,414.2M842.9,344.4 L842.4,347.5 L842.0,350.6 L841.5,353.6 L841.1,356.7 L840.6,359.8 L840.2,362.8 L839.7,365.9 L839.3,368.9 L838.8,372.0 L838.3,375.1 L837.9,378.1 L837.6,381.2 L837.4,384.3 L837.1,387.4 L836.9,390.5 L836.6,393.6 L836.4,396.7 L836.1,399.8 L835.8,402.9 L835.6,406.0 L835.3,409.1 L835.1,412.2 L834.8,415.3 L834.6,418.4M848.4,347.2 L848.0,350.3 L847.6,353.5 L847.1,356.6 L846.7,359.8 L846.3,362.9 L845.9,366.0 L845.5,369.2 L845.0,372.3 L844.6,375.5 L844.2,378.6 L843.8,381.7 L843.5,384.9 L843.3,388.1 L843.0,391.3 L842.8,394.4 L842.6,397.6 L842.3,400.8 L842.1,404.0 L841.8,407.1 L841.6,410.3 L841.4,413.5 L841.1,416.7 L840.9,419.8 L840.6,423.0M854.0,350.0 L853.6,353.2 L853.2,356.5 L852.9,359.7 L852.5,362.9 L852.1,366.1 L851.7,369.3 L851.3,372.6 L850.9,375.8 L850.6,379.0 L850.2,382.2 L849.8,385.4 L849.6,388.7 L849.3,391.9 L849.1,395.2 L848.9,398.4 L848.7,401.7 L848.4,405.0 L848.2,408.2 L848.0,411.5 L847.7,414.7 L847.5,418.0 L847.3,421.2 L847.1,424.5 L846.8,427.7M859.7,352.9 L859.4,356.2 L859.0,359.5 L858.7,362.8 L858.3,366.1 L858.0,369.4 L857.7,372.7 L857.3,376.0 L857.0,379.3 L856.6,382.6 L856.3,385.9 L855.9,389.2 L855.7,392.5 L855.5,395.9 L855.3,399.2 L855.1,402.5 L854.8,405.9 L854.6,409.2 L854.4,412.5 L854.2,415.9 L854.0,419.2 L853.8,422.5 L853.6,425.9 L853.4,429.2 L853.2,432.5M865.6,355.8 L865.3,359.2 L865.0,362.6 L864.6,366.0 L864.3,369.3 L864.0,372.7 L863.7,376.1 L863.4,379.5 L863.1,382.9 L862.8,386.3 L862.5,389.7 L862.1,393.1 L861.9,396.5 L861.8,399.9 L861.6,403.3 L861.4,406.7 L861.2,410.1 L861.0,413.5 L860.8,417.0 L860.6,420.4 L860.4,423.8 L860.2,427.2 L860.0,430.6 L859.8,434.0 L859.6,437.5M871.3,359.1 L871.1,362.6 L870.8,366.0 L870.5,369.5 L870.3,372.9 L870.0,376.4 L869.7,379.9 L869.5,383.3 L869.2,386.8 L868.9,390.3 L868.6,393.7 L868.4,397.2 L868.2,400.7 L868.0,404.1 L867.9,407.6 L867.7,411.1 L867.5,414.6 L867.3,418.1 L867.1,421.6 L867.0,425.0 L866.8,428.5 L866.6,432.0 L866.4,435.5 L866.3,439.0 L866.1,442.5M877.2,362.5 L876.9,366.0 L876.7,369.6 L876.5,373.1 L876.3,376.6 L876.0,380.2 L875.8,383.7 L875.6,387.2 L875.4,390.8 L875.1,394.3 L874.9,397.9 L874.7,401.4 L874.6,404.9 L874.4,408.5 L874.2,412.0 L874.1,415.6 L873.9,419.2 L873.8,422.7 L873.6,426.3 L873.5,429.8 L873.3,433.4 L873.1,436.9 L873.0,440.5 L872.8,444.0 L872.7,447.6M883.1,366.0 L882.9,369.6 L882.7,373.2 L882.5,376.8 L882.3,380.5 L882.1,384.1 L881.9,387.7 L881.7,391.4 L881.5,395.0 L881.3,398.6 L881.1,402.2 L881.0,405.9 L880.8,409.5 L880.7,413.2 L880.5,416.8 L880.4,420.4 L880.2,424.1 L880.1,427.7 L879.9,431.4 L879.8,435.0 L879.6,438.7 L879.5,442.3 L879.3,446.0 L879.2,449.6 L879.0,453.3M889.1,369.5 L888.9,373.2 L888.8,376.9 L888.6,380.6 L888.4,384.4 L888.3,388.1 L888.1,391.8 L888.0,395.5 L887.8,399.2 L887.6,403.0 L887.5,406.7 L887.3,410.4 L887.2,414.2 L887.0,417.9 L886.9,421.6 L886.8,425.4 L886.6,429.1 L886.5,432.8 L886.3,436.6 L886.2,440.3 L886.0,444.0 L885.9,447.8 L885.7,451.5 L885.6,455.3 L885.4,459.0M895.2,373.0 L895.1,376.8 L894.9,380.7 L894.8,384.5 L894.7,388.3 L894.5,392.1 L894.4,395.9 L894.3,399.8 L894.1,403.6 L894.0,407.4 L893.9,411.2 L893.7,415.0 L893.6,418.9 L893.5,422.7 L893.4,426.5 L893.2,430.4 L893.1,434.2 L892.9,438.0 L892.8,441.8 L892.7,445.7 L892.5,449.5 L892.4,453.3 L892.3,457.2 L892.1,461.0 L892.0,464.8M901.4,376.6 L901.3,380.5 L901.2,384.4 L901.1,388.3 L901.0,392.2 L901.0,396.1 L900.9,400.0 L900.8,403.9 L900.7,407.8 L900.6,411.7 L900.5,415.6 L900.5,419.5 L900.4,423.4 L900.3,427.3 L900.2,431.2 L900.0,435.1 L899.9,439.0 L899.8,442.9 L899.7,446.8 L899.6,450.7 L899.5,454.6 L899.4,458.5 L899.2,462.4 L899.1,466.3 L899.0,470.2M907.6,380.3 L907.6,384.3 L907.6,388.2 L907.6,392.2 L907.5,396.2 L907.5,400.1 L907.5,404.1 L907.4,408.1 L907.4,412.0 L907.4,416.0 L907.4,420.0 L907.3,423.9 L907.3,427.9 L907.2,431.9 L907.1,435.9 L907.0,439.8 L906.9,443.8 L906.9,447.8 L906.8,451.7 L906.7,455.7 L906.6,459.7 L906.5,463.7 L906.4,467.6 L906.3,471.6 L906.2,475.6M914.0,384.0 L914.1,387.9 L914.2,391.8 L914.3,395.7 L914.3,399.7 L914.4,403.6 L914.5,407.5 L914.6,411.4 L914.7,415.3 L914.8,419.2 L914.9,423.2 L914.9,427.1 L915.0,431.0 L915.0,434.9 L915.0,438.8 L915.0,442.7 L915.0,446.7 L915.0,450.6 L915.0,454.5 L915.0,458.4 L915.0,462.3 L915.0,466.2 L915.0,470.2 L915.0,474.1 L915.0,478.0M778.0,313.0 L783.8,315.8 L789.6,318.5 L795.3,321.3 L801.1,324.0 L806.9,326.8 L812.7,329.5 L818.4,332.3 L824.2,335.1 L829.9,337.9 L835.6,340.8 L841.3,343.7 L847.0,346.5 L852.8,349.4 L858.5,352.2 L864.2,355.1 L869.8,358.2 L875.3,361.4 L880.8,364.7 L886.4,367.9 L891.9,371.1 L897.4,374.3 L902.9,377.6 L908.5,380.8 L914.0,384.0M776.4,318.9 L781.7,322.3 L787.2,325.6 L792.8,328.8 L798.7,331.8 L804.6,334.8 L810.4,337.8 L816.3,340.8 L822.2,343.8 L828.2,346.7 L834.1,349.7 L839.9,352.8 L845.8,355.9 L851.6,359.0 L857.4,362.1 L863.3,365.2 L869.0,368.5 L874.6,372.0 L880.2,375.4 L885.8,378.9 L891.5,382.4 L897.1,385.9 L902.7,389.3 L908.4,392.7 L914.3,395.7M774.8,324.8 L779.7,328.8 L784.8,332.6 L790.3,336.4 L796.2,339.7 L802.3,342.8 L808.2,346.2 L814.2,349.3 L820.3,352.5 L826.5,355.5 L832.5,358.7 L838.5,361.9 L844.5,365.3 L850.4,368.6 L856.4,372.0 L862.3,375.3 L868.1,378.9 L873.9,382.5 L879.6,386.2 L885.3,390.0 L891.0,393.7 L896.7,397.4 L902.5,401.0 L908.4,404.6 L914.5,407.5M773.2,330.7 L777.6,335.3 L782.5,339.7 L787.8,343.9 L793.8,347.5 L800.0,350.8 L805.9,354.5 L812.1,357.9 L818.4,361.1 L824.7,364.3 L831.0,367.6 L837.1,371.0 L843.2,374.6 L849.2,378.2 L855.3,381.8 L861.3,385.4 L867.3,389.2 L873.2,393.0 L879.0,397.0 L884.8,401.0 L890.6,405.0 L896.4,409.0 L902.3,412.8 L908.3,416.4 L914.8,419.2M771.9,336.6 L775.9,341.8 L780.4,346.8 L785.6,351.5 L791.6,355.4 L798.0,358.9 L803.9,362.9 L810.3,366.5 L816.7,369.9 L823.2,373.1 L829.6,376.6 L835.9,380.2 L842.1,384.0 L848.2,387.8 L854.4,391.7 L860.5,395.6 L866.6,399.5 L872.6,403.6 L878.5,407.8 L884.3,412.1 L890.2,416.3 L896.1,420.5 L902.1,424.5 L908.3,428.3 L915.0,431.0M771.7,342.7 L775.2,348.6 L779.3,354.1 L784.3,359.3 L790.3,363.4 L796.7,367.1 L802.7,371.4 L809.1,375.2 L815.6,378.7 L822.3,382.0 L828.8,385.6 L835.2,389.4 L841.3,393.5 L847.5,397.6 L853.7,401.6 L859.9,405.7 L866.0,409.9 L872.1,414.2 L878.0,418.6 L883.9,423.1 L889.7,427.7 L895.7,432.1 L901.8,436.3 L908.0,440.2 L915.0,442.7M771.5,348.8 L774.4,355.3 L778.2,361.4 L783.0,367.0 L789.0,371.4 L795.4,375.3 L801.4,379.9 L807.8,383.9 L814.5,387.5 L821.3,390.9 L827.9,394.7 L834.4,398.6 L840.6,402.9 L846.8,407.3 L853.1,411.6 L859.3,415.9 L865.4,420.3 L871.6,424.8 L877.6,429.5 L883.4,434.2 L889.3,439.0 L895.3,443.7 L901.5,448.0 L907.8,452.1 L915.0,454.5M771.2,354.9 L773.7,362.0 L777.1,368.6 L781.7,374.7 L787.6,379.4 L794.2,383.5 L800.1,388.4 L806.6,392.6 L813.4,396.3 L820.4,399.8 L827.0,403.7 L833.6,407.9 L839.9,412.4 L846.2,417.0 L852.4,421.5 L858.7,426.1 L864.9,430.7 L871.1,435.4 L877.1,440.3 L883.0,445.3 L888.9,450.3 L894.9,455.3 L901.1,459.8 L907.6,464.1 L915.0,466.2M771.0,361.0 L772.9,368.7 L775.9,375.9 L780.3,382.5 L786.3,387.4 L792.9,391.7 L798.8,396.9 L805.4,401.3 L812.3,405.2 L819.4,408.7 L826.2,412.8 L832.8,417.1 L839.2,421.9 L845.5,426.7 L851.8,431.5 L858.1,436.3 L864.3,441.1 L870.6,446.0 L876.6,451.1 L882.5,456.4 L888.5,461.7 L894.4,466.9 L900.8,471.6 L907.3,476.0 L915.0,478.0" fill="none" stroke="#5ccff0" stroke-width="1"/>
<path d="M771.0,361.0 L774.0,373.0 L782.0,385.0 L791.0,390.0 L800.0,398.0 L810.0,404.0 L820.0,409.0 L831.4,416.0 L850.5,430.5 L872.0,447.0 L893.3,466.0 L906.4,475.7 L915.0,478.0" fill="none" stroke="#5ccff0" stroke-width="1.3"/>
<path d="M938.3,362.0 L946.0,354.0 L956.0,343.8 L968.0,334.0 L981.5,326.0 L994.0,318.5 L1007.0,312.0 L1020.0,307.5 L1032.0,305.0 L1045.0,303.2 L1057.7,302.6 L1066.0,303.2 L1072.9,304.5 L1075.0,309.0 L1063.3,423.0 L935.6,489.0 L937.9,366.0Z" fill="#747474"/>
<path d="M946,358L936.0,487.0M960,349L948.6,480.6M974,337L961.2,474.2M987,326L973.8,467.8M1000,317L986.4,461.4M1013,311.5L999.0,455.0M1025,308.5L1011.6,448.6M1037,307L1024.2,442.2M1049,306.3L1036.8,435.8M1060,306.5L1049.4,429.4M1069,307.5L1062.0,423.0" fill="none" stroke="#5ccff0" stroke-width="1"/>
<path d="M938.3,362.0 L946.0,354.0 L956.0,343.8 L968.0,334.0 L981.5,326.0 L994.0,318.5 L1007.0,312.0 L1020.0,307.5 L1032.0,305.0 L1045.0,303.2 L1057.7,302.6 L1066.0,303.2 L1072.9,304.5" fill="none" stroke="#5ccff0" stroke-width="1.6"/>
<path d="M939.3,366.0 L947.0,358.0 L957.0,347.8 L969.0,338.0 L982.5,330.0 L995.0,322.5 L1008.0,316.0 L1021.0,311.5 L1033.0,309.0 L1046.0,307.2 L1058.7,306.6 L1067.0,307.2 L1073.9,308.5" fill="none" stroke="#5ccff0" stroke-width="1"/>
<path d="M939.8,369.0 L947.5,361.0 L957.5,350.8 L969.5,341.0 L983.0,333.0 L995.5,325.5 L1008.5,319.0 L1021.5,314.5 L1033.5,312.0 L1046.5,310.2 L1059.2,309.6 L1067.5,310.2 L1074.4,311.5" fill="none" stroke="#5ccff0" stroke-width="1"/>
<path d="M935.6,489L1063.3,423" fill="none" stroke="#5ccff0" stroke-width="1.2"/>
<path d="M1072.9,304.3 L1082.4,302.0 L1095.5,306.7 L1077.6,422.0 L1071.0,424.4 L1063.3,423.0Z" fill="#707070"/>
<path d="M1087.0,311.4 L1095.5,306.7 L1077.6,422.0 L1072.9,424.5Z" fill="#787878"/>
<path d="M1075,309L1063.3,423M1079,310L1067,423.5M1086,311.4L1072.9,424.5M1089,310L1075,423.5M1095.5,308L1077.6,422" fill="none" stroke="#5ccff0" stroke-width="1"/>
<path d="M1072.9,304.3 L1082.4,302.0 L1095.5,306.7 L1087.0,311.4Z" fill="#646464" stroke="#5ccff0" stroke-width="1.5"/>
<path d="M1072.9,304.3L1087,311.4" stroke="#e8e8e8" stroke-width="1.2" fill="none"/>
<path d="M1063.3,423L1071,424.4L1077.6,422" fill="none" stroke="#e6e6e6" stroke-width="1"/>
<path d="M910.7,362.9 L922.1,358.6 L937.9,364.3 L935.0,500.0 L920.7,505.7 L907.9,500.0Z" fill="#6a6a6a"/>
<path d="M925.0,368.6 L937.9,364.3 L935.0,500.0 L920.7,505.7Z" fill="#777777"/>
<path d="M910.7,364L907.9,500M914,366L911,501M923.6,368.6L920.7,505.7M926,368L923.5,505M932,366L929.5,503M937.9,365.7L935,500" fill="none" stroke="#5ccff0" stroke-width="1"/>
<path d="M910.7,362.9 L922.1,358.6 L937.9,364.3 L925.0,368.6Z" fill="#646464" stroke="#5ccff0" stroke-width="1.5"/>
<path d="M910.7,362.9L925,368.6" stroke="#e8e8e8" stroke-width="1.2" fill="none"/>
<path d="M907.9,500L920.7,505.7L935,500" fill="none" stroke="#e6e6e6" stroke-width="1.2"/>
</g>
</svg></body></html>
